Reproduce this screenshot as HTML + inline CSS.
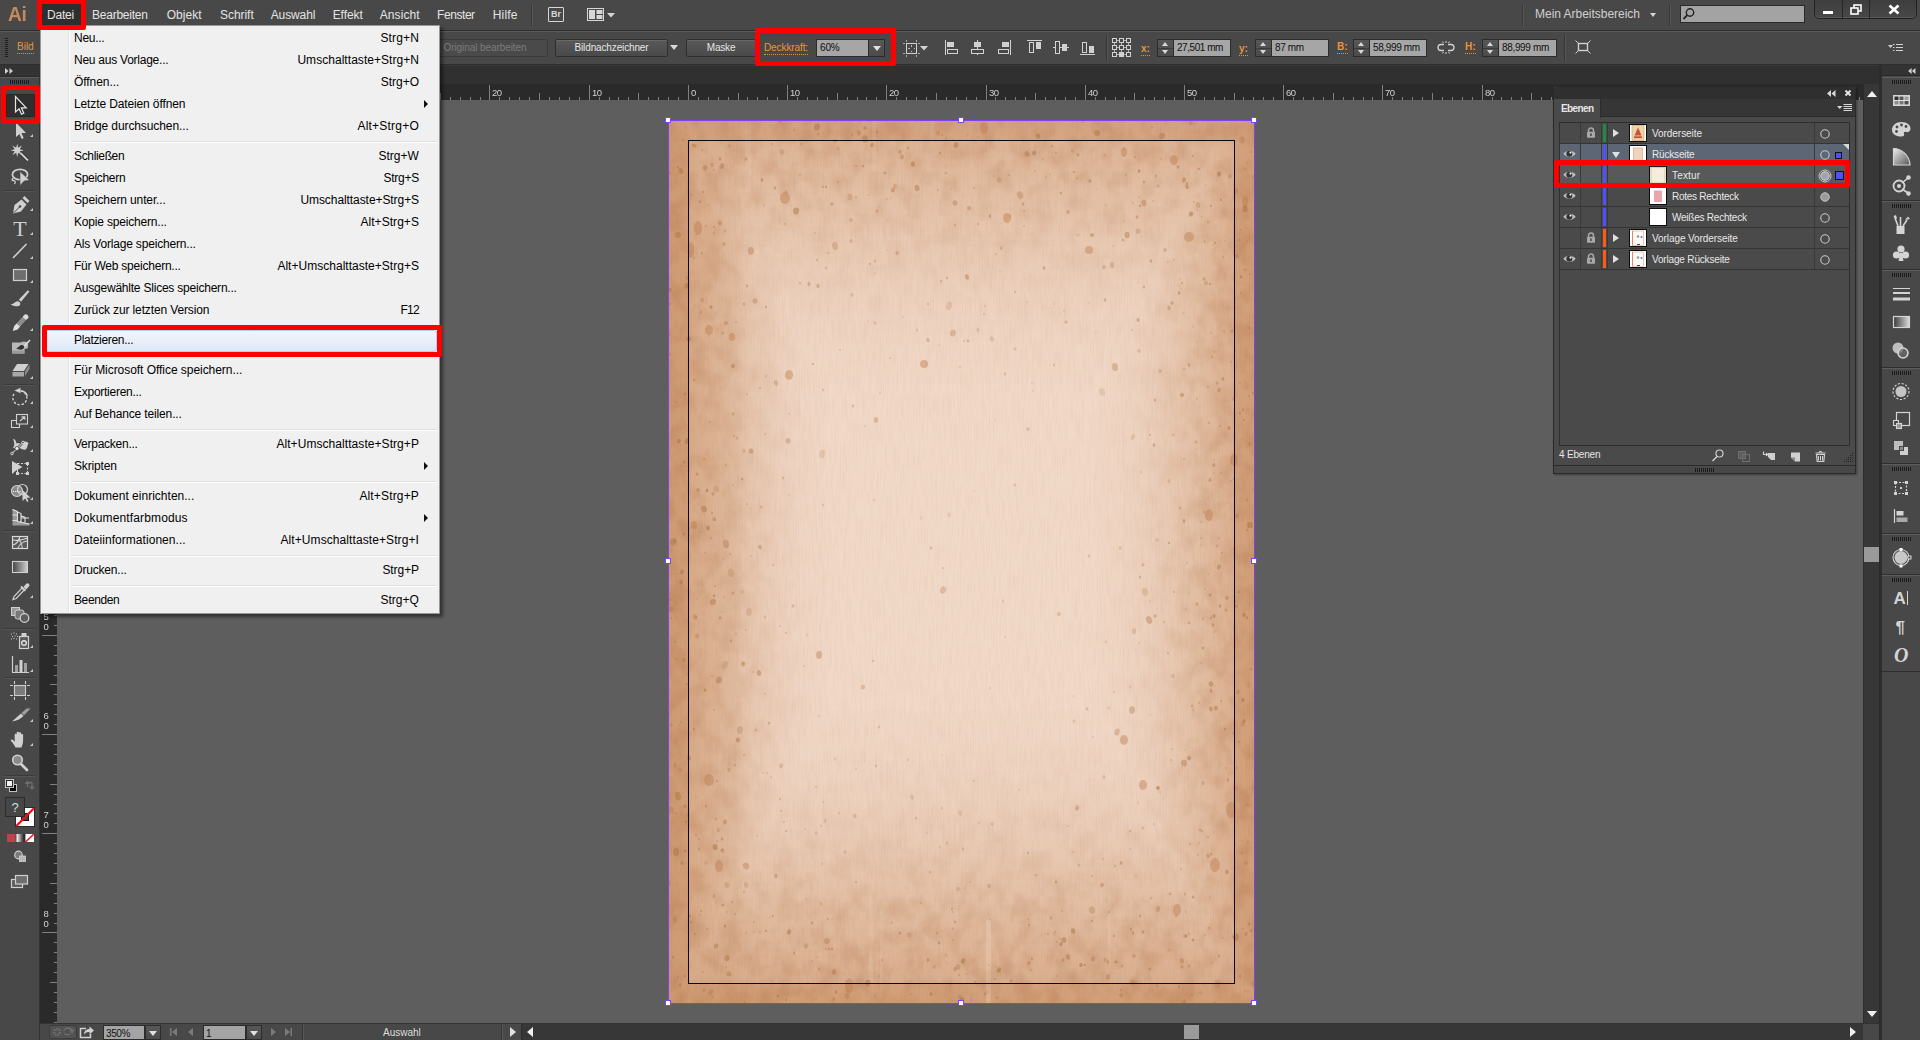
<!DOCTYPE html><html lang="de"><head><meta charset="utf-8"><title>Adobe Illustrator</title><style>
*{box-sizing:border-box;margin:0;padding:0}
html,body{width:1920px;height:1040px;overflow:hidden}
body{background:#5e5e5e;font-family:"Liberation Sans",sans-serif;font-size:10px;color:#e6e6e6;position:relative}
.abs{position:absolute}
.t{position:absolute;white-space:pre;line-height:1}
#menubar{left:0;top:0;width:1920px;height:31px;background:#484848;border-bottom:1px solid #2c2c2c}
#menubar .t{font-size:12px;top:9px;color:#e4e4e4}
#ctrl{left:0;top:31px;width:1920px;height:34px;background:#484848;border-top:1px solid #5a5a5a;border-bottom:1px solid #2e2e2e}
#tabstrip{left:0;top:65px;width:1920px;height:19px;background:#303030;border-top:1px solid #3a3a3a}
#hruler{left:40px;top:84px;width:1823px;height:16px;background:#2a2a2a}
#vruler{left:40px;top:100px;width:17px;height:923px;background:#2a2a2a}
#tools{left:0;top:65px;width:40px;height:975px;background:#484848;border-right:1px solid #333}
#vscroll{left:1863px;top:84px;width:18px;height:939px;background:#373737;border-left:1px solid #2c2c2c}
#status{left:40px;top:1023px;width:1841px;height:17px;background:#484848;border-top:1px solid #333}
#dock{left:1881px;top:65px;width:39px;height:975px;background:#484848;border-left:1px solid #2e2e2e}
.btn{position:absolute;height:18px;top:7px;border:1px solid #2f2f2f;background:linear-gradient(#585858,#4a4a4a);border-radius:2px;color:#e6e6e6;font-size:10px;text-align:center;line-height:16px;box-shadow:inset 0 1px 0 #6a6a6a}
.fld{position:absolute;height:18px;top:7px;border:1px solid #2c2c2c;background:#a6a6a6;color:#111;font-size:10px;line-height:16px;padding-left:3px;white-space:pre}
.lbl{position:absolute;top:11px;font-size:10px;color:#e8943a;line-height:1;white-space:pre;border-bottom:1px dotted #e8943a;padding-bottom:1px}
.red{position:absolute;border:5px solid #f00;border-radius:2px}
#menu{left:40px;top:25px;width:400px;height:589px;background:#f0f0f0;border:1px solid #979797;box-shadow:3px 3px 3px rgba(0,0,0,.45)}
#menu .gut{position:absolute;left:27px;top:1px;width:2px;height:585px;border-left:1px solid #e2e3e3;border-right:1px solid #fff}
#menu .mi{position:absolute;left:33px;font-size:12px;color:#000;white-space:pre;line-height:14px}
#menu .sc{position:absolute;right:20px;font-size:12px;color:#000;white-space:pre;line-height:14px;text-align:right}
#menu .sep{position:absolute;left:30px;right:2px;height:2px;border-top:1px solid #e0e0e0;border-bottom:1px solid #fff}
#menu .arr{position:absolute;left:383px;width:0;height:0;border-left:4px solid #111;border-top:4px solid transparent;border-bottom:4px solid transparent}
</style></head><body>
<svg class="abs" style="left:669px;top:120px" width="585" height="883" viewBox="0 0 585 883"><defs>
<filter id="fbx" filterUnits="userSpaceOnUse" x="-200" y="-400" width="985" height="1683"><feGaussianBlur stdDeviation="54 0"/></filter>
<filter id="fby" filterUnits="userSpaceOnUse" x="-400" y="-300" width="1385" height="1483"><feGaussianBlur stdDeviation="0 105"/></filter>
<mask id="mEdge" maskUnits="userSpaceOnUse" x="0" y="0" width="585" height="883"><g><rect width="585" height="883" fill="#9e9e9e"/><rect x="52" y="-300" width="481" height="1483" fill="#000" filter="url(#fbx)"/></g><g style="mix-blend-mode:lighten"><rect width="585" height="883" fill="#9e9e9e"/><rect x="-300" y="62" width="1185" height="730" fill="#000" filter="url(#fby)"/></g></mask>
<filter id="fb2" x="-30%" y="-30%" width="160%" height="160%"><feGaussianBlur stdDeviation="45 55"/></filter>
<mask id="mSpot" maskUnits="userSpaceOnUse" x="0" y="0" width="585" height="883"><rect width="585" height="883" fill="#fff"/><rect x="120" y="130" width="350" height="600" fill="#000" fill-opacity=".92" filter="url(#fb2)"/></mask>
<filter id="fSpots" x="0" y="0" width="100%" height="100%" color-interpolation-filters="sRGB">
<feTurbulence type="fractalNoise" baseFrequency="0.13" numOctaves="1" seed="5"/>
<feColorMatrix type="matrix" values="0 0 0 0 .66  0 0 0 0 .42  0 0 0 0 .26  12 0 0 0 -8.0"/>
<feGaussianBlur stdDeviation=".7"/>
</filter>
<filter id="fSpots2" x="0" y="0" width="100%" height="100%" color-interpolation-filters="sRGB">
<feTurbulence type="fractalNoise" baseFrequency="0.32" numOctaves="1" seed="9"/>
<feColorMatrix type="matrix" values="0 0 0 0 .68  0 0 0 0 .44  0 0 0 0 .28  0 13 0 0 -8.7"/>
<feGaussianBlur stdDeviation=".5"/>
</filter>
<filter id="fGrain" x="0" y="0" width="100%" height="100%" color-interpolation-filters="sRGB">
<feTurbulence type="fractalNoise" baseFrequency="0.7 0.04" numOctaves="2" seed="3"/>
<feColorMatrix type="matrix" values="0 0 0 0 .62  0 0 0 0 .40  0 0 0 0 .24  1.0 0 0 0 -.40"/>
</filter>
<filter id="fCloud" x="0" y="0" width="100%" height="100%" color-interpolation-filters="sRGB">
<feTurbulence type="fractalNoise" baseFrequency="0.055 0.045" numOctaves="3" seed="21"/>
<feColorMatrix type="matrix" values="0 0 0 0 .68  0 0 0 0 .44  0 0 0 0 .27  2.4 0 0 0 -.95"/>
</filter>
<filter id="fSoft" x="0" y="0" width="100%" height="100%"><feGaussianBlur stdDeviation=".55"/></filter>
<linearGradient id="gLeft" x1="0" x2="1"><stop offset="0" stop-color="#b97a48" stop-opacity=".11"/><stop offset=".56" stop-color="#b97a48" stop-opacity=".11"/><stop offset=".63" stop-color="#b97a48" stop-opacity=".03"/><stop offset="1" stop-color="#b97a48" stop-opacity="0"/></linearGradient>
<linearGradient id="gv" x1="0" y1="0" x2="0" y2="1"><stop offset="0" stop-color="#fff" stop-opacity=".0"/><stop offset=".5" stop-color="#fff" stop-opacity=".35"/><stop offset="1" stop-color="#fff" stop-opacity="0"/></linearGradient>
</defs><rect width="585" height="883" fill="#f1d9c8"/><rect width="585" height="883" fill="#c07e4c" mask="url(#mEdge)"/><path d="M0 0H585V883H0Z M19 20V863H566V20Z" fill="#bd7a48" fill-opacity=".23" fill-rule="evenodd"/><rect x="0" y="0" width="120" height="883" fill="url(#gLeft)"/><g mask="url(#mEdge)"><rect width="585" height="883" filter="url(#fCloud)" opacity=".6"/></g><rect width="585" height="883" filter="url(#fGrain)" opacity=".14"/><g filter="url(#fSoft)" fill="#a8703f"><ellipse cx="464" cy="83" rx="0.7" ry="1.0" fill-opacity="0.36"/><ellipse cx="487" cy="56" rx="1.0" ry="1.4" fill-opacity="0.40"/><ellipse cx="346" cy="172" rx="1.0" ry="1.3" fill-opacity="0.28"/><ellipse cx="163" cy="881" rx="0.7" ry="0.8" fill-opacity="0.44"/><ellipse cx="169" cy="62" rx="1.2" ry="1.4" fill-opacity="0.26"/><ellipse cx="10" cy="605" rx="0.7" ry="1.0" fill-opacity="0.37"/><ellipse cx="43" cy="556" rx="1.0" ry="1.1" fill-opacity="0.31"/><ellipse cx="240" cy="815" rx="2.5" ry="2.6" fill-opacity="0.25" transform="rotate(15 240 815)"/><ellipse cx="112" cy="646" rx="2.0" ry="2.4" fill-opacity="0.26" transform="rotate(25 112 646)"/><ellipse cx="0" cy="763" rx="1.6" ry="2.2" fill-opacity="0.33" transform="rotate(-14 0 763)"/><ellipse cx="59" cy="874" rx="1.0" ry="1.3" fill-opacity="0.24"/><ellipse cx="226" cy="66" rx="2.0" ry="2.5" fill-opacity="0.29" transform="rotate(-6 226 66)"/><ellipse cx="265" cy="847" rx="1.6" ry="1.9" fill-opacity="0.27" transform="rotate(6 265 847)"/><ellipse cx="282" cy="69" rx="0.8" ry="1.1" fill-opacity="0.23"/><ellipse cx="421" cy="61" rx="1.5" ry="1.9" fill-opacity="0.40" transform="rotate(-21 421 61)"/><ellipse cx="124" cy="808" rx="0.7" ry="0.8" fill-opacity="0.30"/><ellipse cx="574" cy="580" rx="1.6" ry="2.0" fill-opacity="0.50" transform="rotate(21 574 580)"/><ellipse cx="20" cy="528" rx="0.7" ry="0.8" fill-opacity="0.44"/><ellipse cx="44" cy="482" rx="3.0" ry="3.2" fill-opacity="0.42" transform="rotate(23 44 482)"/><ellipse cx="200" cy="75" rx="0.7" ry="0.8" fill-opacity="0.45"/><ellipse cx="515" cy="643" rx="3.0" ry="3.6" fill-opacity="0.38" transform="rotate(-2 515 643)"/><ellipse cx="181" cy="77" rx="2.5" ry="3.4" fill-opacity="0.25" transform="rotate(8 181 77)"/><ellipse cx="284" cy="792" rx="0.8" ry="0.9" fill-opacity="0.38"/><ellipse cx="530" cy="583" rx="1.0" ry="1.3" fill-opacity="0.30"/><ellipse cx="515" cy="339" rx="1.1" ry="1.2" fill-opacity="0.25"/><ellipse cx="524" cy="36" rx="1.0" ry="1.1" fill-opacity="0.47"/><ellipse cx="542" cy="734" rx="1.4" ry="1.6" fill-opacity="0.36"/><ellipse cx="574" cy="400" rx="0.7" ry="0.9" fill-opacity="0.32"/><ellipse cx="111" cy="679" rx="0.8" ry="1.2" fill-opacity="0.36"/><ellipse cx="64" cy="473" rx="1.1" ry="1.4" fill-opacity="0.44"/><ellipse cx="278" cy="158" rx="1.3" ry="1.3" fill-opacity="0.29"/><ellipse cx="293" cy="880" rx="2.5" ry="2.6" fill-opacity="0.49" transform="rotate(22 293 880)"/><ellipse cx="423" cy="115" rx="2.0" ry="2.0" fill-opacity="0.42" transform="rotate(3 423 115)"/><ellipse cx="58" cy="765" rx="2.5" ry="2.8" fill-opacity="0.26" transform="rotate(-5 58 765)"/><ellipse cx="545" cy="231" rx="0.6" ry="0.6" fill-opacity="0.32"/><ellipse cx="17" cy="714" rx="0.7" ry="0.8" fill-opacity="0.29"/><ellipse cx="82" cy="131" rx="3.0" ry="3.9" fill-opacity="0.35" transform="rotate(-3 82 131)"/><ellipse cx="486" cy="496" rx="1.4" ry="1.8" fill-opacity="0.36"/><ellipse cx="16" cy="856" rx="1.2" ry="1.7" fill-opacity="0.39"/><ellipse cx="268" cy="813" rx="1.2" ry="1.5" fill-opacity="0.29"/><ellipse cx="361" cy="817" rx="0.6" ry="0.6" fill-opacity="0.24"/><ellipse cx="166" cy="639" rx="1.3" ry="1.7" fill-opacity="0.18"/><ellipse cx="299" cy="221" rx="1.4" ry="1.4" fill-opacity="0.32"/><ellipse cx="505" cy="472" rx="0.9" ry="1.1" fill-opacity="0.39"/><ellipse cx="528" cy="279" rx="0.9" ry="1.3" fill-opacity="0.27"/><ellipse cx="247" cy="698" rx="1.2" ry="1.6" fill-opacity="0.29"/><ellipse cx="201" cy="882" rx="0.7" ry="0.7" fill-opacity="0.37"/><ellipse cx="359" cy="799" rx="0.9" ry="1.0" fill-opacity="0.27"/><ellipse cx="579" cy="818" rx="0.7" ry="0.9" fill-opacity="0.28"/><ellipse cx="57" cy="345" rx="1.1" ry="1.4" fill-opacity="0.32"/><ellipse cx="410" cy="745" rx="1.3" ry="1.5" fill-opacity="0.28"/><ellipse cx="354" cy="84" rx="1.1" ry="1.5" fill-opacity="0.45"/><ellipse cx="504" cy="556" rx="1.8" ry="2.3" fill-opacity="0.24" transform="rotate(-8 504 556)"/><ellipse cx="446" cy="247" rx="3.0" ry="4.1" fill-opacity="0.32" transform="rotate(-5 446 247)"/><ellipse cx="524" cy="777" rx="1.2" ry="1.4" fill-opacity="0.44"/><ellipse cx="41" cy="302" rx="0.6" ry="0.9" fill-opacity="0.46"/><ellipse cx="106" cy="68" rx="1.3" ry="1.7" fill-opacity="0.40"/><ellipse cx="573" cy="20" rx="3.0" ry="3.6" fill-opacity="0.31" transform="rotate(0 573 20)"/><ellipse cx="445" cy="572" rx="1.0" ry="1.4" fill-opacity="0.21"/><ellipse cx="297" cy="854" rx="0.8" ry="1.1" fill-opacity="0.41"/><ellipse cx="350" cy="670" rx="0.9" ry="1.3" fill-opacity="0.23"/><ellipse cx="158" cy="821" rx="3.0" ry="3.0" fill-opacity="0.31" transform="rotate(-13 158 821)"/><ellipse cx="25" cy="138" rx="1.2" ry="1.4" fill-opacity="0.25"/><ellipse cx="147" cy="667" rx="0.8" ry="1.1" fill-opacity="0.36"/><ellipse cx="573" cy="721" rx="0.8" ry="1.0" fill-opacity="0.25"/><ellipse cx="504" cy="315" rx="1.1" ry="1.4" fill-opacity="0.30"/><ellipse cx="557" cy="648" rx="0.8" ry="0.9" fill-opacity="0.37"/><ellipse cx="424" cy="617" rx="1.0" ry="1.1" fill-opacity="0.29"/><ellipse cx="573" cy="809" rx="0.7" ry="0.7" fill-opacity="0.42"/><ellipse cx="16" cy="34" rx="1.0" ry="1.0" fill-opacity="0.26"/><ellipse cx="280" cy="186" rx="3.0" ry="4.2" fill-opacity="0.20" transform="rotate(15 280 186)"/><ellipse cx="228" cy="133" rx="1.8" ry="2.2" fill-opacity="0.27" transform="rotate(12 228 133)"/><ellipse cx="539" cy="378" rx="0.8" ry="0.9" fill-opacity="0.34"/><ellipse cx="271" cy="727" rx="1.0" ry="1.3" fill-opacity="0.23"/><ellipse cx="166" cy="126" rx="3.0" ry="4.2" fill-opacity="0.28" transform="rotate(-9 166 126)"/><ellipse cx="581" cy="405" rx="3.0" ry="3.3" fill-opacity="0.49" transform="rotate(-7 581 405)"/><ellipse cx="515" cy="249" rx="1.4" ry="1.5" fill-opacity="0.22"/><ellipse cx="13" cy="743" rx="1.6" ry="2.2" fill-opacity="0.39" transform="rotate(-21 13 743)"/><ellipse cx="50" cy="560" rx="3.0" ry="3.6" fill-opacity="0.43" transform="rotate(11 50 560)"/><ellipse cx="286" cy="802" rx="1.3" ry="1.5" fill-opacity="0.32"/><ellipse cx="520" cy="846" rx="1.4" ry="1.4" fill-opacity="0.34"/><ellipse cx="540" cy="808" rx="0.9" ry="1.1" fill-opacity="0.51"/><ellipse cx="120" cy="375" rx="0.7" ry="0.9" fill-opacity="0.26"/><ellipse cx="91" cy="812" rx="1.3" ry="1.6" fill-opacity="0.24"/><ellipse cx="183" cy="175" rx="1.6" ry="2.1" fill-opacity="0.23" transform="rotate(5 183 175)"/><ellipse cx="131" cy="163" rx="0.9" ry="1.3" fill-opacity="0.40"/><ellipse cx="551" cy="486" rx="1.3" ry="1.8" fill-opacity="0.47"/><ellipse cx="320" cy="845" rx="1.0" ry="1.1" fill-opacity="0.34"/><ellipse cx="467" cy="862" rx="1.0" ry="1.0" fill-opacity="0.46"/><ellipse cx="85" cy="802" rx="0.8" ry="1.2" fill-opacity="0.40"/><ellipse cx="1" cy="725" rx="0.8" ry="0.9" fill-opacity="0.26"/><ellipse cx="57" cy="424" rx="3.0" ry="4.2" fill-opacity="0.36" transform="rotate(-10 57 424)"/><ellipse cx="53" cy="730" rx="1.5" ry="1.8" fill-opacity="0.34" transform="rotate(22 53 730)"/><ellipse cx="564" cy="279" rx="1.5" ry="1.8" fill-opacity="0.32" transform="rotate(11 564 279)"/><ellipse cx="210" cy="607" rx="1.2" ry="1.6" fill-opacity="0.26"/><ellipse cx="439" cy="842" rx="1.5" ry="1.7" fill-opacity="0.42" transform="rotate(-15 439 842)"/><ellipse cx="484" cy="81" rx="0.8" ry="1.0" fill-opacity="0.26"/><ellipse cx="113" cy="32" rx="2.5" ry="2.8" fill-opacity="0.26" transform="rotate(-17 113 32)"/><ellipse cx="73" cy="359" rx="1.2" ry="1.3" fill-opacity="0.42"/><ellipse cx="87" cy="610" rx="1.2" ry="1.6" fill-opacity="0.33"/><ellipse cx="186" cy="696" rx="1.8" ry="2.0" fill-opacity="0.28" transform="rotate(-16 186 696)"/><ellipse cx="120" cy="294" rx="0.8" ry="0.9" fill-opacity="0.29"/><ellipse cx="528" cy="484" rx="1.4" ry="1.8" fill-opacity="0.34"/><ellipse cx="546" cy="882" rx="0.9" ry="0.9" fill-opacity="0.40"/><ellipse cx="454" cy="120" rx="1.2" ry="1.4" fill-opacity="0.38"/><ellipse cx="570" cy="120" rx="1.5" ry="1.5" fill-opacity="0.39" transform="rotate(21 570 120)"/><ellipse cx="2" cy="605" rx="1.6" ry="1.7" fill-opacity="0.34" transform="rotate(5 2 605)"/><ellipse cx="530" cy="543" rx="0.6" ry="0.7" fill-opacity="0.26"/><ellipse cx="309" cy="104" rx="1.1" ry="1.2" fill-opacity="0.33"/><ellipse cx="194" cy="567" rx="2.2" ry="2.6" fill-opacity="0.28" transform="rotate(-0 194 567)"/><ellipse cx="534" cy="499" rx="1.0" ry="1.4" fill-opacity="0.34"/><ellipse cx="500" cy="361" rx="1.6" ry="2.3" fill-opacity="0.22" transform="rotate(-8 500 361)"/><ellipse cx="305" cy="371" rx="0.7" ry="0.9" fill-opacity="0.19"/><ellipse cx="516" cy="774" rx="1.3" ry="1.8" fill-opacity="0.29"/><ellipse cx="515" cy="882" rx="2.2" ry="2.7" fill-opacity="0.34" transform="rotate(3 515 882)"/><ellipse cx="96" cy="574" rx="0.8" ry="0.8" fill-opacity="0.38"/><ellipse cx="0" cy="215" rx="1.1" ry="1.3" fill-opacity="0.29"/><ellipse cx="184" cy="286" rx="1.3" ry="1.4" fill-opacity="0.30"/><ellipse cx="405" cy="52" rx="1.1" ry="1.1" fill-opacity="0.47"/><ellipse cx="562" cy="242" rx="0.8" ry="1.1" fill-opacity="0.33"/><ellipse cx="71" cy="610" rx="3.0" ry="3.9" fill-opacity="0.26" transform="rotate(15 71 610)"/><ellipse cx="542" cy="589" rx="2.0" ry="2.4" fill-opacity="0.40" transform="rotate(-21 542 589)"/><ellipse cx="537" cy="65" rx="0.6" ry="0.7" fill-opacity="0.40"/><ellipse cx="470" cy="77" rx="0.9" ry="1.0" fill-opacity="0.29"/><ellipse cx="20" cy="408" rx="1.2" ry="1.7" fill-opacity="0.24"/><ellipse cx="37" cy="686" rx="1.1" ry="1.5" fill-opacity="0.41"/><ellipse cx="305" cy="840" rx="0.9" ry="1.1" fill-opacity="0.26"/><ellipse cx="499" cy="533" rx="0.9" ry="1.2" fill-opacity="0.32"/><ellipse cx="511" cy="159" rx="0.6" ry="0.8" fill-opacity="0.37"/><ellipse cx="423" cy="756" rx="0.8" ry="1.0" fill-opacity="0.41"/><ellipse cx="463" cy="210" rx="1.0" ry="1.3" fill-opacity="0.27"/><ellipse cx="412" cy="845" rx="1.8" ry="1.9" fill-opacity="0.51" transform="rotate(-2 412 845)"/><ellipse cx="436" cy="35" rx="1.4" ry="1.6" fill-opacity="0.28"/><ellipse cx="248" cy="68" rx="2.5" ry="3.3" fill-opacity="0.43" transform="rotate(-14 248 68)"/><ellipse cx="270" cy="823" rx="1.1" ry="1.6" fill-opacity="0.48"/><ellipse cx="517" cy="816" rx="1.2" ry="1.3" fill-opacity="0.49"/><ellipse cx="29" cy="370" rx="1.5" ry="1.8" fill-opacity="0.45" transform="rotate(-5 29 370)"/><ellipse cx="127" cy="91" rx="3.0" ry="3.5" fill-opacity="0.46" transform="rotate(13 127 91)"/><ellipse cx="423" cy="801" rx="1.1" ry="1.3" fill-opacity="0.44"/><ellipse cx="75" cy="184" rx="1.3" ry="1.4" fill-opacity="0.35"/><ellipse cx="86" cy="181" rx="2.5" ry="2.7" fill-opacity="0.31" transform="rotate(1 86 181)"/><ellipse cx="208" cy="91" rx="1.8" ry="1.8" fill-opacity="0.27" transform="rotate(-24 208 91)"/><ellipse cx="571" cy="263" rx="0.9" ry="1.0" fill-opacity="0.39"/><ellipse cx="152" cy="706" rx="1.3" ry="1.5" fill-opacity="0.19"/><ellipse cx="291" cy="247" rx="1.2" ry="1.6" fill-opacity="0.19"/><ellipse cx="531" cy="710" rx="1.0" ry="1.2" fill-opacity="0.41"/><ellipse cx="13" cy="346" rx="0.7" ry="0.8" fill-opacity="0.49"/><ellipse cx="518" cy="64" rx="1.1" ry="1.4" fill-opacity="0.48"/><ellipse cx="360" cy="843" rx="1.6" ry="1.8" fill-opacity="0.43" transform="rotate(-21 360 843)"/><ellipse cx="28" cy="479" rx="0.7" ry="1.0" fill-opacity="0.31"/><ellipse cx="223" cy="803" rx="0.8" ry="0.9" fill-opacity="0.40"/><ellipse cx="277" cy="19" rx="1.0" ry="1.3" fill-opacity="0.30"/><ellipse cx="1" cy="480" rx="1.0" ry="1.4" fill-opacity="0.39"/><ellipse cx="46" cy="727" rx="2.5" ry="2.9" fill-opacity="0.49" transform="rotate(-8 46 727)"/><ellipse cx="482" cy="141" rx="1.3" ry="1.5" fill-opacity="0.41"/><ellipse cx="579" cy="722" rx="1.0" ry="1.2" fill-opacity="0.27"/><ellipse cx="509" cy="47" rx="1.4" ry="1.8" fill-opacity="0.44"/><ellipse cx="107" cy="756" rx="1.6" ry="2.0" fill-opacity="0.42" transform="rotate(-4 107 756)"/><ellipse cx="469" cy="111" rx="2.2" ry="2.8" fill-opacity="0.29" transform="rotate(24 469 111)"/><ellipse cx="543" cy="237" rx="1.0" ry="1.2" fill-opacity="0.39"/><ellipse cx="578" cy="43" rx="0.8" ry="0.9" fill-opacity="0.48"/><ellipse cx="529" cy="735" rx="0.9" ry="1.0" fill-opacity="0.33"/><ellipse cx="491" cy="251" rx="1.8" ry="1.9" fill-opacity="0.28" transform="rotate(4 491 251)"/><ellipse cx="395" cy="191" rx="0.8" ry="1.1" fill-opacity="0.26"/><ellipse cx="525" cy="778" rx="0.8" ry="0.8" fill-opacity="0.32"/><ellipse cx="84" cy="552" rx="1.0" ry="1.1" fill-opacity="0.21"/><ellipse cx="327" cy="134" rx="1.0" ry="1.0" fill-opacity="0.34"/><ellipse cx="239" cy="28" rx="1.5" ry="1.5" fill-opacity="0.35" transform="rotate(3 239 28)"/><ellipse cx="103" cy="24" rx="0.8" ry="0.9" fill-opacity="0.43"/><ellipse cx="325" cy="56" rx="0.9" ry="1.0" fill-opacity="0.25"/><ellipse cx="548" cy="426" rx="1.2" ry="1.7" fill-opacity="0.29"/><ellipse cx="163" cy="799" rx="0.8" ry="0.9" fill-opacity="0.29"/><ellipse cx="27" cy="115" rx="0.9" ry="0.9" fill-opacity="0.29"/><ellipse cx="205" cy="380" rx="1.4" ry="1.5" fill-opacity="0.15"/><ellipse cx="491" cy="672" rx="0.9" ry="1.2" fill-opacity="0.27"/><ellipse cx="578" cy="380" rx="1.0" ry="1.4" fill-opacity="0.38"/><ellipse cx="475" cy="62" rx="1.1" ry="1.5" fill-opacity="0.47"/><ellipse cx="6" cy="645" rx="2.0" ry="2.6" fill-opacity="0.26" transform="rotate(-8 6 645)"/><ellipse cx="567" cy="817" rx="3.0" ry="3.6" fill-opacity="0.43" transform="rotate(8 567 817)"/><ellipse cx="19" cy="554" rx="1.6" ry="1.6" fill-opacity="0.25" transform="rotate(-9 19 554)"/><ellipse cx="440" cy="792" rx="0.9" ry="1.2" fill-opacity="0.43"/><ellipse cx="485" cy="704" rx="1.0" ry="1.4" fill-opacity="0.21"/><ellipse cx="147" cy="713" rx="1.5" ry="1.8" fill-opacity="0.19" transform="rotate(-1 147 713)"/><ellipse cx="563" cy="211" rx="1.3" ry="1.6" fill-opacity="0.45"/><ellipse cx="321" cy="800" rx="0.8" ry="0.9" fill-opacity="0.43"/><ellipse cx="543" cy="843" rx="1.0" ry="1.1" fill-opacity="0.27"/><ellipse cx="42" cy="872" rx="2.0" ry="2.9" fill-opacity="0.33" transform="rotate(24 42 872)"/><ellipse cx="328" cy="878" rx="1.1" ry="1.5" fill-opacity="0.44"/><ellipse cx="385" cy="184" rx="0.8" ry="1.0" fill-opacity="0.21"/><ellipse cx="364" cy="271" rx="0.7" ry="0.9" fill-opacity="0.27"/><ellipse cx="551" cy="306" rx="1.0" ry="1.1" fill-opacity="0.36"/><ellipse cx="513" cy="841" rx="2.0" ry="2.8" fill-opacity="0.36" transform="rotate(-6 513 841)"/><ellipse cx="38" cy="370" rx="1.3" ry="1.5" fill-opacity="0.40"/><ellipse cx="7" cy="539" rx="1.1" ry="1.5" fill-opacity="0.28"/><ellipse cx="58" cy="792" rx="1.1" ry="1.1" fill-opacity="0.24"/><ellipse cx="408" cy="874" rx="0.6" ry="0.6" fill-opacity="0.43"/><ellipse cx="381" cy="54" rx="0.6" ry="0.7" fill-opacity="0.50"/><ellipse cx="39" cy="408" rx="2.0" ry="2.5" fill-opacity="0.47" transform="rotate(4 39 408)"/><ellipse cx="56" cy="702" rx="2.0" ry="2.7" fill-opacity="0.40" transform="rotate(20 56 702)"/><ellipse cx="388" cy="856" rx="0.8" ry="0.9" fill-opacity="0.36"/><ellipse cx="64" cy="365" rx="0.8" ry="0.8" fill-opacity="0.40"/><ellipse cx="330" cy="60" rx="2.2" ry="2.7" fill-opacity="0.25" transform="rotate(-10 330 60)"/><ellipse cx="32" cy="192" rx="1.5" ry="1.6" fill-opacity="0.26" transform="rotate(20 32 192)"/><ellipse cx="474" cy="445" rx="1.6" ry="1.9" fill-opacity="0.28" transform="rotate(6 474 445)"/><ellipse cx="505" cy="851" rx="0.6" ry="0.8" fill-opacity="0.30"/><ellipse cx="534" cy="480" rx="0.7" ry="0.8" fill-opacity="0.32"/><ellipse cx="542" cy="86" rx="1.0" ry="1.1" fill-opacity="0.44"/><ellipse cx="252" cy="398" rx="1.4" ry="1.7" fill-opacity="0.15"/><ellipse cx="234" cy="197" rx="1.1" ry="1.3" fill-opacity="0.17"/><ellipse cx="564" cy="613" rx="0.9" ry="1.1" fill-opacity="0.40"/><ellipse cx="31" cy="82" rx="1.0" ry="1.4" fill-opacity="0.46"/><ellipse cx="218" cy="79" rx="0.8" ry="1.2" fill-opacity="0.24"/><ellipse cx="461" cy="567" rx="1.3" ry="1.7" fill-opacity="0.18"/><ellipse cx="542" cy="564" rx="2.2" ry="2.8" fill-opacity="0.42" transform="rotate(-25 542 564)"/><ellipse cx="575" cy="809" rx="0.7" ry="0.9" fill-opacity="0.36"/><ellipse cx="187" cy="649" rx="0.8" ry="0.9" fill-opacity="0.33"/><ellipse cx="404" cy="576" rx="0.9" ry="1.0" fill-opacity="0.16"/><ellipse cx="554" cy="137" rx="1.2" ry="1.4" fill-opacity="0.24"/><ellipse cx="395" cy="820" rx="2.5" ry="3.1" fill-opacity="0.44" transform="rotate(-1 395 820)"/><ellipse cx="190" cy="13" rx="2.0" ry="2.5" fill-opacity="0.34" transform="rotate(1 190 13)"/><ellipse cx="574" cy="290" rx="1.0" ry="1.2" fill-opacity="0.42"/><ellipse cx="26" cy="814" rx="1.0" ry="1.3" fill-opacity="0.34"/><ellipse cx="532" cy="402" rx="1.0" ry="1.3" fill-opacity="0.26"/><ellipse cx="206" cy="141" rx="1.3" ry="1.9" fill-opacity="0.22"/><ellipse cx="471" cy="86" rx="0.9" ry="1.2" fill-opacity="0.48"/><ellipse cx="201" cy="144" rx="0.9" ry="1.3" fill-opacity="0.39"/><ellipse cx="213" cy="840" rx="1.0" ry="1.4" fill-opacity="0.40"/><ellipse cx="65" cy="316" rx="1.0" ry="1.1" fill-opacity="0.37"/><ellipse cx="154" cy="67" rx="1.0" ry="1.1" fill-opacity="0.48"/><ellipse cx="481" cy="481" rx="0.7" ry="0.9" fill-opacity="0.29"/><ellipse cx="386" cy="812" rx="1.0" ry="1.2" fill-opacity="0.30"/><ellipse cx="518" cy="67" rx="1.6" ry="2.1" fill-opacity="0.49" transform="rotate(-21 518 67)"/><ellipse cx="528" cy="90" rx="0.8" ry="0.9" fill-opacity="0.29"/><ellipse cx="82" cy="838" rx="0.8" ry="1.0" fill-opacity="0.25"/><ellipse cx="305" cy="68" rx="0.9" ry="1.2" fill-opacity="0.25"/><ellipse cx="541" cy="777" rx="0.8" ry="0.8" fill-opacity="0.37"/><ellipse cx="326" cy="859" rx="0.8" ry="0.9" fill-opacity="0.49"/><ellipse cx="159" cy="133" rx="0.8" ry="1.1" fill-opacity="0.40"/><ellipse cx="19" cy="99" rx="0.6" ry="0.6" fill-opacity="0.35"/><ellipse cx="392" cy="73" rx="0.9" ry="1.2" fill-opacity="0.48"/><ellipse cx="196" cy="306" rx="1.0" ry="1.3" fill-opacity="0.19"/><ellipse cx="137" cy="779" rx="0.8" ry="1.0" fill-opacity="0.27"/><ellipse cx="537" cy="163" rx="1.8" ry="2.2" fill-opacity="0.30" transform="rotate(-12 537 163)"/><ellipse cx="513" cy="163" rx="1.0" ry="1.3" fill-opacity="0.35"/><ellipse cx="20" cy="219" rx="2.2" ry="2.4" fill-opacity="0.45" transform="rotate(-14 20 219)"/><ellipse cx="242" cy="874" rx="1.1" ry="1.1" fill-opacity="0.26"/><ellipse cx="585" cy="370" rx="1.0" ry="1.4" fill-opacity="0.33"/><ellipse cx="278" cy="723" rx="1.3" ry="1.9" fill-opacity="0.19"/><ellipse cx="93" cy="60" rx="1.3" ry="1.8" fill-opacity="0.50"/><ellipse cx="544" cy="125" rx="0.7" ry="0.7" fill-opacity="0.29"/><ellipse cx="160" cy="829" rx="0.9" ry="1.2" fill-opacity="0.43"/><ellipse cx="470" cy="231" rx="2.0" ry="2.1" fill-opacity="0.23" transform="rotate(-10 470 231)"/><ellipse cx="445" cy="816" rx="0.9" ry="1.2" fill-opacity="0.48"/><ellipse cx="283" cy="789" rx="1.1" ry="1.5" fill-opacity="0.36"/><ellipse cx="14" cy="673" rx="0.7" ry="0.7" fill-opacity="0.32"/><ellipse cx="481" cy="849" rx="1.2" ry="1.5" fill-opacity="0.46"/><ellipse cx="272" cy="161" rx="1.0" ry="1.2" fill-opacity="0.38"/><ellipse cx="435" cy="147" rx="1.6" ry="1.9" fill-opacity="0.32" transform="rotate(2 435 147)"/><ellipse cx="137" cy="826" rx="2.2" ry="2.7" fill-opacity="0.28" transform="rotate(24 137 826)"/><ellipse cx="138" cy="515" rx="1.1" ry="1.1" fill-opacity="0.21"/><ellipse cx="540" cy="454" rx="0.6" ry="0.7" fill-opacity="0.40"/><ellipse cx="495" cy="502" rx="1.1" ry="1.3" fill-opacity="0.30"/><ellipse cx="568" cy="247" rx="0.7" ry="0.7" fill-opacity="0.32"/><ellipse cx="233" cy="37" rx="2.0" ry="2.4" fill-opacity="0.37" transform="rotate(3 233 37)"/><ellipse cx="553" cy="433" rx="1.0" ry="1.3" fill-opacity="0.32"/><ellipse cx="542" cy="571" rx="1.3" ry="1.9" fill-opacity="0.44"/><ellipse cx="474" cy="708" rx="1.3" ry="1.4" fill-opacity="0.26"/><ellipse cx="13" cy="452" rx="2.0" ry="2.8" fill-opacity="0.41" transform="rotate(22 13 452)"/><ellipse cx="377" cy="57" rx="0.8" ry="0.9" fill-opacity="0.30"/><ellipse cx="1" cy="234" rx="1.3" ry="1.7" fill-opacity="0.30"/><ellipse cx="135" cy="546" rx="0.8" ry="0.9" fill-opacity="0.26"/><ellipse cx="362" cy="850" rx="1.1" ry="1.2" fill-opacity="0.27"/><ellipse cx="39" cy="85" rx="0.7" ry="0.9" fill-opacity="0.37"/><ellipse cx="117" cy="513" rx="1.1" ry="1.3" fill-opacity="0.25"/><ellipse cx="462" cy="809" rx="1.2" ry="1.6" fill-opacity="0.34"/><ellipse cx="528" cy="222" rx="0.6" ry="0.7" fill-opacity="0.35"/><ellipse cx="33" cy="133" rx="1.0" ry="1.3" fill-opacity="0.45"/><ellipse cx="157" cy="704" rx="0.7" ry="0.8" fill-opacity="0.27"/><ellipse cx="278" cy="843" rx="0.7" ry="0.7" fill-opacity="0.39"/><ellipse cx="291" cy="693" rx="2.0" ry="2.8" fill-opacity="0.21" transform="rotate(-5 291 693)"/><ellipse cx="51" cy="498" rx="1.6" ry="1.6" fill-opacity="0.34" transform="rotate(-21 51 498)"/><ellipse cx="558" cy="752" rx="1.6" ry="2.3" fill-opacity="0.48" transform="rotate(7 558 752)"/><ellipse cx="196" cy="19" rx="3.0" ry="3.6" fill-opacity="0.38" transform="rotate(-5 196 19)"/><ellipse cx="515" cy="401" rx="1.4" ry="1.9" fill-opacity="0.43"/><ellipse cx="424" cy="839" rx="2.2" ry="2.4" fill-opacity="0.36" transform="rotate(-10 424 839)"/><ellipse cx="351" cy="75" rx="3.0" ry="4.0" fill-opacity="0.31" transform="rotate(-24 351 75)"/><ellipse cx="243" cy="677" rx="1.8" ry="2.5" fill-opacity="0.23" transform="rotate(-10 243 677)"/><ellipse cx="559" cy="660" rx="1.3" ry="1.8" fill-opacity="0.39"/><ellipse cx="318" cy="872" rx="1.6" ry="2.1" fill-opacity="0.33" transform="rotate(23 318 872)"/><ellipse cx="523" cy="586" rx="1.2" ry="1.3" fill-opacity="0.38"/><ellipse cx="13" cy="256" rx="0.7" ry="0.8" fill-opacity="0.26"/><ellipse cx="404" cy="732" rx="1.0" ry="1.3" fill-opacity="0.22"/><ellipse cx="358" cy="182" rx="0.7" ry="0.7" fill-opacity="0.30"/><ellipse cx="12" cy="51" rx="2.2" ry="3.1" fill-opacity="0.47" transform="rotate(-14 12 51)"/><ellipse cx="514" cy="193" rx="1.1" ry="1.6" fill-opacity="0.22"/><ellipse cx="379" cy="814" rx="1.2" ry="1.3" fill-opacity="0.27"/><ellipse cx="500" cy="423" rx="1.3" ry="1.3" fill-opacity="0.35"/><ellipse cx="37" cy="743" rx="1.6" ry="1.8" fill-opacity="0.24" transform="rotate(5 37 743)"/><ellipse cx="532" cy="543" rx="0.7" ry="0.9" fill-opacity="0.39"/><ellipse cx="171" cy="230" rx="1.0" ry="1.1" fill-opacity="0.24"/><ellipse cx="95" cy="85" rx="0.9" ry="1.3" fill-opacity="0.31"/><ellipse cx="131" cy="20" rx="0.7" ry="0.7" fill-opacity="0.42"/><ellipse cx="552" cy="80" rx="1.0" ry="1.4" fill-opacity="0.48"/><ellipse cx="489" cy="66" rx="1.1" ry="1.4" fill-opacity="0.38"/><ellipse cx="44" cy="877" rx="0.8" ry="1.1" fill-opacity="0.46"/><ellipse cx="262" cy="874" rx="1.6" ry="2.0" fill-opacity="0.45" transform="rotate(4 262 874)"/><ellipse cx="369" cy="16" rx="2.2" ry="2.8" fill-opacity="0.50" transform="rotate(-13 369 16)"/><ellipse cx="306" cy="862" rx="0.9" ry="1.2" fill-opacity="0.47"/><ellipse cx="33" cy="30" rx="0.8" ry="1.0" fill-opacity="0.46"/><ellipse cx="471" cy="796" rx="1.1" ry="1.4" fill-opacity="0.39"/><ellipse cx="26" cy="497" rx="2.2" ry="2.9" fill-opacity="0.30" transform="rotate(-16 26 497)"/><ellipse cx="290" cy="855" rx="1.0" ry="1.1" fill-opacity="0.31"/><ellipse cx="547" cy="588" rx="2.0" ry="2.6" fill-opacity="0.41" transform="rotate(-6 547 588)"/><ellipse cx="420" cy="436" rx="1.3" ry="1.4" fill-opacity="0.25"/><ellipse cx="68" cy="318" rx="1.5" ry="1.6" fill-opacity="0.29" transform="rotate(5 68 318)"/><ellipse cx="535" cy="159" rx="1.3" ry="1.7" fill-opacity="0.40"/><ellipse cx="262" cy="428" rx="1.5" ry="1.5" fill-opacity="0.28" transform="rotate(-16 262 428)"/><ellipse cx="30" cy="729" rx="0.9" ry="1.3" fill-opacity="0.40"/><ellipse cx="470" cy="523" rx="0.9" ry="0.9" fill-opacity="0.21"/><ellipse cx="375" cy="148" rx="1.5" ry="1.8" fill-opacity="0.36" transform="rotate(-6 375 148)"/><ellipse cx="437" cy="85" rx="1.0" ry="1.3" fill-opacity="0.23"/><ellipse cx="196" cy="8" rx="1.6" ry="1.8" fill-opacity="0.48" transform="rotate(-11 196 8)"/><ellipse cx="516" cy="816" rx="2.0" ry="2.3" fill-opacity="0.25" transform="rotate(-10 516 816)"/><ellipse cx="541" cy="164" rx="1.1" ry="1.2" fill-opacity="0.44"/><ellipse cx="433" cy="765" rx="1.8" ry="2.3" fill-opacity="0.37" transform="rotate(19 433 765)"/><ellipse cx="520" cy="245" rx="1.3" ry="1.9" fill-opacity="0.37"/><ellipse cx="457" cy="55" rx="1.0" ry="1.4" fill-opacity="0.29"/><ellipse cx="18" cy="165" rx="1.8" ry="2.5" fill-opacity="0.29" transform="rotate(-15 18 165)"/><ellipse cx="326" cy="300" rx="0.6" ry="0.8" fill-opacity="0.26"/><ellipse cx="274" cy="448" rx="1.2" ry="1.3" fill-opacity="0.25"/><ellipse cx="566" cy="179" rx="0.9" ry="1.1" fill-opacity="0.43"/><ellipse cx="546" cy="123" rx="1.0" ry="1.2" fill-opacity="0.42"/><ellipse cx="218" cy="100" rx="0.6" ry="0.6" fill-opacity="0.33"/><ellipse cx="499" cy="142" rx="0.7" ry="1.0" fill-opacity="0.37"/><ellipse cx="517" cy="489" rx="0.7" ry="1.0" fill-opacity="0.37"/><ellipse cx="6" cy="421" rx="1.8" ry="1.9" fill-opacity="0.49" transform="rotate(-12 6 421)"/><ellipse cx="57" cy="847" rx="0.7" ry="0.9" fill-opacity="0.37"/><ellipse cx="231" cy="813" rx="1.2" ry="1.7" fill-opacity="0.40"/><ellipse cx="69" cy="620" rx="2.2" ry="2.6" fill-opacity="0.44" transform="rotate(3 69 620)"/><ellipse cx="57" cy="203" rx="2.0" ry="2.3" fill-opacity="0.30" transform="rotate(19 57 203)"/><ellipse cx="125" cy="10" rx="1.3" ry="1.4" fill-opacity="0.28"/><ellipse cx="513" cy="648" rx="0.8" ry="1.0" fill-opacity="0.26"/><ellipse cx="30" cy="826" rx="0.8" ry="0.8" fill-opacity="0.36"/><ellipse cx="571" cy="293" rx="0.9" ry="1.3" fill-opacity="0.47"/><ellipse cx="453" cy="846" rx="0.9" ry="1.2" fill-opacity="0.50"/><ellipse cx="424" cy="798" rx="0.7" ry="0.8" fill-opacity="0.43"/><ellipse cx="131" cy="55" rx="1.0" ry="1.4" fill-opacity="0.28"/><ellipse cx="103" cy="861" rx="0.8" ry="1.0" fill-opacity="0.26"/><ellipse cx="573" cy="733" rx="1.2" ry="1.6" fill-opacity="0.35"/><ellipse cx="539" cy="267" rx="0.8" ry="1.2" fill-opacity="0.41"/><ellipse cx="286" cy="83" rx="2.5" ry="2.7" fill-opacity="0.34" transform="rotate(-10 286 83)"/><ellipse cx="18" cy="564" rx="1.1" ry="1.1" fill-opacity="0.37"/><ellipse cx="48" cy="661" rx="1.0" ry="1.3" fill-opacity="0.34"/><ellipse cx="20" cy="372" rx="0.8" ry="1.1" fill-opacity="0.34"/><ellipse cx="53" cy="492" rx="0.7" ry="0.9" fill-opacity="0.26"/><ellipse cx="46" cy="400" rx="0.8" ry="1.0" fill-opacity="0.42"/><ellipse cx="461" cy="729" rx="0.8" ry="1.1" fill-opacity="0.37"/><ellipse cx="455" cy="101" rx="0.9" ry="1.0" fill-opacity="0.36"/><ellipse cx="1" cy="484" rx="0.9" ry="1.0" fill-opacity="0.26"/><ellipse cx="150" cy="596" rx="0.8" ry="1.0" fill-opacity="0.27"/><ellipse cx="286" cy="849" rx="2.0" ry="2.1" fill-opacity="0.34" transform="rotate(16 286 849)"/><ellipse cx="572" cy="157" rx="1.3" ry="1.4" fill-opacity="0.50"/><ellipse cx="532" cy="418" rx="1.1" ry="1.2" fill-opacity="0.24"/><ellipse cx="16" cy="686" rx="1.4" ry="1.8" fill-opacity="0.43"/><ellipse cx="332" cy="128" rx="1.2" ry="1.7" fill-opacity="0.32"/><ellipse cx="524" cy="590" rx="1.1" ry="1.3" fill-opacity="0.22"/><ellipse cx="182" cy="121" rx="1.8" ry="1.9" fill-opacity="0.29" transform="rotate(-20 182 121)"/><ellipse cx="9" cy="676" rx="3.0" ry="4.3" fill-opacity="0.47" transform="rotate(-15 9 676)"/><ellipse cx="492" cy="39" rx="0.7" ry="0.9" fill-opacity="0.37"/><ellipse cx="474" cy="812" rx="1.4" ry="1.5" fill-opacity="0.48"/><ellipse cx="117" cy="711" rx="1.0" ry="1.0" fill-opacity="0.40"/><ellipse cx="187" cy="77" rx="1.4" ry="1.6" fill-opacity="0.23"/><ellipse cx="472" cy="352" rx="1.2" ry="1.3" fill-opacity="0.19"/><ellipse cx="199" cy="201" rx="0.7" ry="0.8" fill-opacity="0.23"/><ellipse cx="541" cy="475" rx="1.3" ry="1.5" fill-opacity="0.40"/><ellipse cx="221" cy="238" rx="1.0" ry="1.1" fill-opacity="0.29"/><ellipse cx="17" cy="7" rx="0.9" ry="0.9" fill-opacity="0.25"/><ellipse cx="489" cy="789" rx="2.2" ry="3.1" fill-opacity="0.30" transform="rotate(20 489 789)"/><ellipse cx="539" cy="736" rx="1.5" ry="2.1" fill-opacity="0.39" transform="rotate(-23 539 736)"/><ellipse cx="96" cy="497" rx="1.3" ry="1.7" fill-opacity="0.21"/><ellipse cx="562" cy="361" rx="0.7" ry="0.9" fill-opacity="0.40"/><ellipse cx="259" cy="220" rx="1.6" ry="2.3" fill-opacity="0.32" transform="rotate(-19 259 220)"/><ellipse cx="64" cy="294" rx="1.3" ry="1.4" fill-opacity="0.34"/><ellipse cx="11" cy="650" rx="1.4" ry="1.6" fill-opacity="0.30"/><ellipse cx="580" cy="276" rx="0.7" ry="1.0" fill-opacity="0.50"/><ellipse cx="552" cy="581" rx="0.8" ry="1.1" fill-opacity="0.44"/><ellipse cx="60" cy="854" rx="2.5" ry="2.6" fill-opacity="0.40" transform="rotate(-7 60 854)"/><ellipse cx="102" cy="657" rx="0.7" ry="1.0" fill-opacity="0.39"/><ellipse cx="480" cy="500" rx="3.0" ry="4.0" fill-opacity="0.37" transform="rotate(-22 480 500)"/><ellipse cx="28" cy="516" rx="2.2" ry="2.5" fill-opacity="0.29" transform="rotate(-3 28 516)"/><ellipse cx="35" cy="870" rx="1.2" ry="1.6" fill-opacity="0.44"/><ellipse cx="321" cy="96" rx="1.2" ry="1.7" fill-opacity="0.44"/><ellipse cx="566" cy="724" rx="0.8" ry="0.8" fill-opacity="0.43"/><ellipse cx="207" cy="300" rx="2.2" ry="3.0" fill-opacity="0.31" transform="rotate(2 207 300)"/><ellipse cx="31" cy="412" rx="0.7" ry="1.0" fill-opacity="0.49"/><ellipse cx="269" cy="13" rx="2.0" ry="2.8" fill-opacity="0.29" transform="rotate(-7 269 13)"/><ellipse cx="36" cy="570" rx="1.3" ry="1.6" fill-opacity="0.49"/><ellipse cx="452" cy="875" rx="2.0" ry="2.0" fill-opacity="0.35" transform="rotate(-9 452 875)"/><ellipse cx="206" cy="876" rx="1.0" ry="1.4" fill-opacity="0.26"/><ellipse cx="435" cy="657" rx="1.4" ry="1.9" fill-opacity="0.25"/><ellipse cx="572" cy="173" rx="1.0" ry="1.2" fill-opacity="0.33"/><ellipse cx="78" cy="274" rx="1.1" ry="1.5" fill-opacity="0.23"/><ellipse cx="579" cy="685" rx="1.6" ry="1.9" fill-opacity="0.27" transform="rotate(-2 579 685)"/><ellipse cx="35" cy="389" rx="3.0" ry="3.4" fill-opacity="0.41" transform="rotate(-14 35 389)"/><ellipse cx="520" cy="814" rx="1.1" ry="1.4" fill-opacity="0.26"/><ellipse cx="58" cy="838" rx="2.5" ry="3.2" fill-opacity="0.44" transform="rotate(16 58 838)"/><ellipse cx="77" cy="746" rx="3.0" ry="3.6" fill-opacity="0.35" transform="rotate(-24 77 746)"/><ellipse cx="409" cy="35" rx="1.3" ry="1.4" fill-opacity="0.42"/><ellipse cx="111" cy="1" rx="1.6" ry="1.9" fill-opacity="0.38" transform="rotate(20 111 1)"/><ellipse cx="583" cy="240" rx="0.6" ry="0.6" fill-opacity="0.28"/><ellipse cx="60" cy="26" rx="1.4" ry="1.8" fill-opacity="0.25"/><ellipse cx="536" cy="815" rx="0.7" ry="1.0" fill-opacity="0.46"/><ellipse cx="100" cy="603" rx="1.1" ry="1.5" fill-opacity="0.37"/><ellipse cx="555" cy="211" rx="1.0" ry="1.2" fill-opacity="0.26"/><ellipse cx="258" cy="713" rx="0.8" ry="0.9" fill-opacity="0.23"/><ellipse cx="2" cy="489" rx="2.5" ry="2.7" fill-opacity="0.37" transform="rotate(-1 2 489)"/><ellipse cx="572" cy="110" rx="1.0" ry="1.0" fill-opacity="0.39"/><ellipse cx="244" cy="44" rx="2.0" ry="2.8" fill-opacity="0.46" transform="rotate(-6 244 44)"/><ellipse cx="576" cy="150" rx="1.5" ry="1.5" fill-opacity="0.30" transform="rotate(-19 576 150)"/><ellipse cx="49" cy="710" rx="1.3" ry="1.9" fill-opacity="0.34"/><ellipse cx="166" cy="21" rx="1.8" ry="2.0" fill-opacity="0.28" transform="rotate(-18 166 21)"/><ellipse cx="287" cy="25" rx="2.2" ry="2.9" fill-opacity="0.48" transform="rotate(19 287 25)"/><ellipse cx="486" cy="280" rx="1.3" ry="1.6" fill-opacity="0.35"/><ellipse cx="567" cy="668" rx="1.0" ry="1.2" fill-opacity="0.32"/><ellipse cx="520" cy="503" rx="1.5" ry="1.5" fill-opacity="0.35" transform="rotate(-2 520 503)"/><ellipse cx="47" cy="369" rx="3.0" ry="3.5" fill-opacity="0.24" transform="rotate(0 47 369)"/><ellipse cx="465" cy="836" rx="1.8" ry="1.9" fill-opacity="0.35" transform="rotate(-2 465 836)"/><ellipse cx="37" cy="106" rx="1.2" ry="1.3" fill-opacity="0.27"/><ellipse cx="43" cy="393" rx="1.0" ry="1.3" fill-opacity="0.46"/><ellipse cx="334" cy="481" rx="1.1" ry="1.5" fill-opacity="0.21"/><ellipse cx="346" cy="229" rx="1.5" ry="2.1" fill-opacity="0.22" transform="rotate(1 346 229)"/><ellipse cx="54" cy="731" rx="2.0" ry="2.5" fill-opacity="0.23" transform="rotate(-13 54 731)"/><ellipse cx="360" cy="805" rx="1.0" ry="1.3" fill-opacity="0.41"/><ellipse cx="124" cy="486" rx="1.5" ry="1.7" fill-opacity="0.28" transform="rotate(7 124 486)"/><ellipse cx="182" cy="100" rx="1.8" ry="1.9" fill-opacity="0.27" transform="rotate(-15 182 100)"/><ellipse cx="393" cy="791" rx="0.9" ry="1.3" fill-opacity="0.31"/><ellipse cx="488" cy="866" rx="1.0" ry="1.3" fill-opacity="0.41"/><ellipse cx="132" cy="24" rx="1.2" ry="1.6" fill-opacity="0.28"/><ellipse cx="521" cy="724" rx="0.9" ry="1.1" fill-opacity="0.37"/><ellipse cx="554" cy="259" rx="1.4" ry="1.7" fill-opacity="0.48"/><ellipse cx="483" cy="7" rx="0.9" ry="1.0" fill-opacity="0.39"/><ellipse cx="342" cy="861" rx="1.5" ry="1.6" fill-opacity="0.45" transform="rotate(-10 342 861)"/><ellipse cx="92" cy="387" rx="1.1" ry="1.5" fill-opacity="0.31"/><ellipse cx="390" cy="494" rx="2.2" ry="2.2" fill-opacity="0.23" transform="rotate(-1 390 494)"/><ellipse cx="363" cy="263" rx="0.8" ry="1.1" fill-opacity="0.18"/><ellipse cx="302" cy="880" rx="1.3" ry="1.9" fill-opacity="0.24"/><ellipse cx="96" cy="314" rx="0.8" ry="1.2" fill-opacity="0.32"/><ellipse cx="2" cy="498" rx="0.9" ry="1.1" fill-opacity="0.51"/><ellipse cx="320" cy="766" rx="2.0" ry="2.3" fill-opacity="0.26" transform="rotate(-0 320 766)"/><ellipse cx="259" cy="184" rx="1.1" ry="1.2" fill-opacity="0.29"/><ellipse cx="139" cy="863" rx="1.1" ry="1.3" fill-opacity="0.34"/><ellipse cx="291" cy="877" rx="1.8" ry="2.5" fill-opacity="0.31" transform="rotate(-3 291 877)"/><ellipse cx="9" cy="47" rx="1.0" ry="1.4" fill-opacity="0.51"/><ellipse cx="427" cy="212" rx="0.7" ry="0.8" fill-opacity="0.30"/><ellipse cx="54" cy="213" rx="1.4" ry="1.5" fill-opacity="0.32"/><ellipse cx="545" cy="232" rx="0.7" ry="1.0" fill-opacity="0.32"/><ellipse cx="298" cy="157" rx="2.0" ry="2.8" fill-opacity="0.39" transform="rotate(-20 298 157)"/><ellipse cx="26" cy="26" rx="1.6" ry="1.7" fill-opacity="0.36" transform="rotate(9 26 26)"/><ellipse cx="582" cy="549" rx="1.5" ry="2.0" fill-opacity="0.30" transform="rotate(-4 582 549)"/><ellipse cx="309" cy="17" rx="0.8" ry="0.9" fill-opacity="0.26"/><ellipse cx="148" cy="7" rx="3.0" ry="3.6" fill-opacity="0.50" transform="rotate(13 148 7)"/><ellipse cx="385" cy="814" rx="1.1" ry="1.5" fill-opacity="0.24"/><ellipse cx="176" cy="732" rx="1.6" ry="1.9" fill-opacity="0.24" transform="rotate(-13 176 732)"/><ellipse cx="61" cy="434" rx="1.0" ry="1.3" fill-opacity="0.32"/><ellipse cx="80" cy="492" rx="3.0" ry="4.0" fill-opacity="0.20" transform="rotate(8 80 492)"/><ellipse cx="27" cy="677" rx="1.0" ry="1.2" fill-opacity="0.24"/><ellipse cx="273" cy="15" rx="0.9" ry="1.0" fill-opacity="0.39"/><ellipse cx="323" cy="219" rx="2.2" ry="2.8" fill-opacity="0.21" transform="rotate(-17 323 219)"/><ellipse cx="101" cy="797" rx="0.8" ry="0.9" fill-opacity="0.31"/><ellipse cx="568" cy="396" rx="2.0" ry="2.2" fill-opacity="0.32" transform="rotate(-12 568 396)"/><ellipse cx="136" cy="709" rx="1.0" ry="1.1" fill-opacity="0.19"/><ellipse cx="556" cy="121" rx="0.7" ry="0.8" fill-opacity="0.46"/><ellipse cx="515" cy="60" rx="2.0" ry="2.7" fill-opacity="0.42" transform="rotate(17 515 60)"/><ellipse cx="104" cy="445" rx="1.2" ry="1.4" fill-opacity="0.22"/><ellipse cx="388" cy="822" rx="0.7" ry="0.9" fill-opacity="0.49"/><ellipse cx="305" cy="661" rx="1.1" ry="1.1" fill-opacity="0.28"/><ellipse cx="367" cy="755" rx="1.0" ry="1.1" fill-opacity="0.33"/><ellipse cx="82" cy="331" rx="2.2" ry="2.5" fill-opacity="0.40" transform="rotate(17 82 331)"/><ellipse cx="143" cy="841" rx="0.9" ry="0.9" fill-opacity="0.26"/><ellipse cx="170" cy="693" rx="0.9" ry="1.3" fill-opacity="0.26"/><ellipse cx="544" cy="365" rx="0.7" ry="0.9" fill-opacity="0.23"/><ellipse cx="210" cy="856" rx="1.2" ry="1.6" fill-opacity="0.24"/><ellipse cx="47" cy="826" rx="2.2" ry="2.6" fill-opacity="0.41" transform="rotate(23 47 826)"/><ellipse cx="560" cy="308" rx="1.5" ry="1.9" fill-opacity="0.44" transform="rotate(21 560 308)"/><ellipse cx="403" cy="31" rx="0.8" ry="1.0" fill-opacity="0.42"/><ellipse cx="154" cy="385" rx="1.0" ry="1.2" fill-opacity="0.26"/><ellipse cx="25" cy="260" rx="1.2" ry="1.4" fill-opacity="0.37"/><ellipse cx="1" cy="53" rx="1.0" ry="1.4" fill-opacity="0.39"/><ellipse cx="399" cy="92" rx="1.8" ry="1.9" fill-opacity="0.37" transform="rotate(20 399 92)"/><ellipse cx="571" cy="856" rx="1.1" ry="1.5" fill-opacity="0.45"/><ellipse cx="15" cy="414" rx="1.5" ry="1.6" fill-opacity="0.43" transform="rotate(-21 15 414)"/><ellipse cx="27" cy="715" rx="1.0" ry="1.2" fill-opacity="0.38"/><ellipse cx="115" cy="702" rx="0.7" ry="0.9" fill-opacity="0.38"/><ellipse cx="550" cy="418" rx="1.4" ry="1.5" fill-opacity="0.28"/><ellipse cx="289" cy="769" rx="2.0" ry="2.2" fill-opacity="0.22" transform="rotate(12 289 769)"/><ellipse cx="391" cy="819" rx="0.8" ry="1.0" fill-opacity="0.40"/><ellipse cx="433" cy="272" rx="3.0" ry="3.9" fill-opacity="0.17" transform="rotate(-22 433 272)"/><ellipse cx="107" cy="263" rx="2.2" ry="2.8" fill-opacity="0.31" transform="rotate(-21 107 263)"/><ellipse cx="213" cy="647" rx="0.7" ry="0.7" fill-opacity="0.22"/><ellipse cx="548" cy="864" rx="3.0" ry="4.0" fill-opacity="0.28" transform="rotate(13 548 864)"/><ellipse cx="157" cy="67" rx="1.0" ry="1.3" fill-opacity="0.47"/><ellipse cx="203" cy="25" rx="1.8" ry="2.3" fill-opacity="0.50" transform="rotate(22 203 25)"/><ellipse cx="416" cy="845" rx="1.1" ry="1.2" fill-opacity="0.49"/><ellipse cx="554" cy="818" rx="0.8" ry="0.8" fill-opacity="0.46"/><ellipse cx="120" cy="13" rx="0.7" ry="0.9" fill-opacity="0.30"/><ellipse cx="316" cy="874" rx="1.3" ry="1.5" fill-opacity="0.39"/><ellipse cx="91" cy="427" rx="1.6" ry="2.3" fill-opacity="0.40" transform="rotate(-15 91 427)"/><ellipse cx="550" cy="447" rx="2.0" ry="2.8" fill-opacity="0.37" transform="rotate(24 550 447)"/><ellipse cx="464" cy="317" rx="2.0" ry="2.9" fill-opacity="0.19" transform="rotate(21 464 317)"/><ellipse cx="394" cy="840" rx="1.4" ry="1.7" fill-opacity="0.45"/><ellipse cx="187" cy="46" rx="1.1" ry="1.1" fill-opacity="0.31"/><ellipse cx="567" cy="71" rx="2.0" ry="2.9" fill-opacity="0.32" transform="rotate(24 567 71)"/><ellipse cx="56" cy="545" rx="3.0" ry="4.1" fill-opacity="0.24" transform="rotate(22 56 545)"/><ellipse cx="536" cy="469" rx="0.8" ry="1.1" fill-opacity="0.35"/><ellipse cx="331" cy="151" rx="0.7" ry="0.8" fill-opacity="0.27"/><ellipse cx="42" cy="418" rx="1.0" ry="1.3" fill-opacity="0.38"/><ellipse cx="44" cy="374" rx="1.6" ry="1.7" fill-opacity="0.39" transform="rotate(-2 44 374)"/><ellipse cx="9" cy="454" rx="0.8" ry="1.1" fill-opacity="0.35"/><ellipse cx="532" cy="425" rx="0.8" ry="0.9" fill-opacity="0.26"/><ellipse cx="56" cy="806" rx="1.2" ry="1.5" fill-opacity="0.50"/><ellipse cx="1" cy="170" rx="1.5" ry="2.1" fill-opacity="0.43" transform="rotate(15 1 170)"/><ellipse cx="500" cy="188" rx="1.8" ry="2.2" fill-opacity="0.34" transform="rotate(-12 500 188)"/><ellipse cx="552" cy="353" rx="1.0" ry="1.3" fill-opacity="0.25"/><ellipse cx="513" cy="847" rx="1.4" ry="1.4" fill-opacity="0.41"/><ellipse cx="211" cy="273" rx="1.0" ry="1.0" fill-opacity="0.23"/><ellipse cx="117" cy="880" rx="1.1" ry="1.3" fill-opacity="0.46"/><ellipse cx="206" cy="153" rx="0.8" ry="0.8" fill-opacity="0.25"/><ellipse cx="466" cy="37" rx="0.8" ry="1.0" fill-opacity="0.44"/><ellipse cx="404" cy="811" rx="2.2" ry="2.7" fill-opacity="0.47" transform="rotate(-7 404 811)"/><ellipse cx="309" cy="210" rx="1.6" ry="2.1" fill-opacity="0.22" transform="rotate(7 309 210)"/><ellipse cx="1" cy="184" rx="1.2" ry="1.6" fill-opacity="0.38"/><ellipse cx="545" cy="345" rx="1.5" ry="1.9" fill-opacity="0.39" transform="rotate(6 545 345)"/><ellipse cx="42" cy="187" rx="1.6" ry="1.8" fill-opacity="0.48" transform="rotate(-1 42 187)"/><ellipse cx="520" cy="638" rx="2.2" ry="2.3" fill-opacity="0.44" transform="rotate(23 520 638)"/><ellipse cx="463" cy="862" rx="2.0" ry="2.2" fill-opacity="0.32" transform="rotate(1 463 862)"/><ellipse cx="216" cy="53" rx="1.3" ry="1.4" fill-opacity="0.45"/><ellipse cx="573" cy="319" rx="0.7" ry="1.0" fill-opacity="0.25"/><ellipse cx="550" cy="54" rx="2.0" ry="2.8" fill-opacity="0.50" transform="rotate(2 550 54)"/><ellipse cx="582" cy="32" rx="1.0" ry="1.0" fill-opacity="0.42"/><ellipse cx="343" cy="640" rx="0.7" ry="0.8" fill-opacity="0.16"/><ellipse cx="336" cy="517" rx="0.7" ry="0.9" fill-opacity="0.30"/><ellipse cx="74" cy="544" rx="1.8" ry="2.5" fill-opacity="0.40" transform="rotate(-17 74 544)"/><ellipse cx="397" cy="202" rx="1.5" ry="1.5" fill-opacity="0.35" transform="rotate(17 397 202)"/><ellipse cx="67" cy="202" rx="0.8" ry="1.1" fill-opacity="0.41"/><ellipse cx="363" cy="114" rx="0.7" ry="1.0" fill-opacity="0.22"/><ellipse cx="261" cy="752" rx="1.1" ry="1.2" fill-opacity="0.31"/><ellipse cx="24" cy="25" rx="1.3" ry="1.6" fill-opacity="0.47"/><ellipse cx="239" cy="640" rx="1.3" ry="1.4" fill-opacity="0.19"/><ellipse cx="16" cy="304" rx="0.9" ry="1.0" fill-opacity="0.30"/><ellipse cx="78" cy="166" rx="1.4" ry="1.5" fill-opacity="0.31"/><ellipse cx="45" cy="50" rx="0.9" ry="0.9" fill-opacity="0.36"/><ellipse cx="75" cy="772" rx="1.1" ry="1.4" fill-opacity="0.24"/><ellipse cx="56" cy="111" rx="1.1" ry="1.6" fill-opacity="0.25"/><ellipse cx="64" cy="246" rx="2.0" ry="2.2" fill-opacity="0.41" transform="rotate(24 64 246)"/><ellipse cx="358" cy="34" rx="2.2" ry="2.9" fill-opacity="0.44" transform="rotate(-24 358 34)"/><ellipse cx="548" cy="263" rx="1.5" ry="1.6" fill-opacity="0.36" transform="rotate(20 548 263)"/><ellipse cx="414" cy="2" rx="1.0" ry="1.2" fill-opacity="0.29"/><ellipse cx="28" cy="354" rx="1.2" ry="1.5" fill-opacity="0.46"/><ellipse cx="154" cy="682" rx="0.8" ry="1.1" fill-opacity="0.25"/><ellipse cx="294" cy="729" rx="1.2" ry="1.7" fill-opacity="0.28"/><ellipse cx="310" cy="703" rx="0.9" ry="1.1" fill-opacity="0.24"/><ellipse cx="578" cy="121" rx="0.8" ry="1.1" fill-opacity="0.25"/><ellipse cx="475" cy="83" rx="2.5" ry="3.4" fill-opacity="0.33" transform="rotate(-9 475 83)"/><ellipse cx="54" cy="439" rx="0.7" ry="0.9" fill-opacity="0.29"/><ellipse cx="580" cy="804" rx="1.1" ry="1.5" fill-opacity="0.45"/><ellipse cx="527" cy="329" rx="0.7" ry="0.8" fill-opacity="0.23"/><ellipse cx="45" cy="113" rx="1.3" ry="1.7" fill-opacity="0.25"/><ellipse cx="530" cy="49" rx="1.1" ry="1.1" fill-opacity="0.46"/><ellipse cx="296" cy="768" rx="0.7" ry="0.8" fill-opacity="0.37"/><ellipse cx="271" cy="33" rx="1.0" ry="1.2" fill-opacity="0.47"/><ellipse cx="576" cy="89" rx="2.5" ry="3.4" fill-opacity="0.49" transform="rotate(4 576 89)"/><ellipse cx="512" cy="749" rx="1.2" ry="1.4" fill-opacity="0.24"/><ellipse cx="561" cy="56" rx="2.0" ry="2.2" fill-opacity="0.34" transform="rotate(8 561 56)"/><ellipse cx="46" cy="466" rx="0.9" ry="1.1" fill-opacity="0.46"/><ellipse cx="383" cy="26" rx="1.4" ry="1.6" fill-opacity="0.34"/><ellipse cx="51" cy="103" rx="1.8" ry="2.4" fill-opacity="0.42" transform="rotate(-15 51 103)"/><ellipse cx="299" cy="15" rx="0.7" ry="0.8" fill-opacity="0.47"/><ellipse cx="428" cy="69" rx="0.6" ry="0.9" fill-opacity="0.26"/><ellipse cx="535" cy="121" rx="1.0" ry="1.1" fill-opacity="0.24"/><ellipse cx="564" cy="817" rx="1.1" ry="1.4" fill-opacity="0.26"/><ellipse cx="20" cy="638" rx="2.0" ry="2.4" fill-opacity="0.43" transform="rotate(4 20 638)"/><ellipse cx="544" cy="505" rx="1.3" ry="1.7" fill-opacity="0.40"/><ellipse cx="447" cy="842" rx="1.3" ry="1.6" fill-opacity="0.49"/><ellipse cx="7" cy="282" rx="0.9" ry="1.0" fill-opacity="0.42"/><ellipse cx="25" cy="609" rx="1.2" ry="1.6" fill-opacity="0.39"/><ellipse cx="45" cy="476" rx="1.4" ry="1.4" fill-opacity="0.41"/><ellipse cx="199" cy="863" rx="3.0" ry="3.3" fill-opacity="0.47" transform="rotate(18 199 863)"/><ellipse cx="443" cy="145" rx="2.2" ry="3.1" fill-opacity="0.28" transform="rotate(-1 443 145)"/><ellipse cx="568" cy="437" rx="0.6" ry="0.8" fill-opacity="0.27"/><ellipse cx="535" cy="392" rx="1.0" ry="1.0" fill-opacity="0.46"/><ellipse cx="359" cy="733" rx="1.0" ry="1.4" fill-opacity="0.34"/><ellipse cx="346" cy="365" rx="1.3" ry="1.8" fill-opacity="0.22"/><ellipse cx="14" cy="20" rx="1.2" ry="1.3" fill-opacity="0.41"/><ellipse cx="277" cy="53" rx="1.3" ry="1.5" fill-opacity="0.27"/><ellipse cx="294" cy="841" rx="2.0" ry="2.8" fill-opacity="0.46" transform="rotate(17 294 841)"/><ellipse cx="503" cy="183" rx="1.6" ry="1.7" fill-opacity="0.40" transform="rotate(-7 503 183)"/><ellipse cx="150" cy="849" rx="1.3" ry="1.8" fill-opacity="0.32"/><ellipse cx="97" cy="256" rx="1.3" ry="1.5" fill-opacity="0.21"/><ellipse cx="281" cy="864" rx="0.9" ry="1.2" fill-opacity="0.33"/><ellipse cx="295" cy="221" rx="0.9" ry="1.0" fill-opacity="0.25"/><ellipse cx="66" cy="645" rx="1.2" ry="1.2" fill-opacity="0.31"/><ellipse cx="77" cy="813" rx="1.3" ry="1.6" fill-opacity="0.24"/><ellipse cx="15" cy="540" rx="1.4" ry="2.0" fill-opacity="0.43"/><ellipse cx="577" cy="814" rx="1.6" ry="2.3" fill-opacity="0.36" transform="rotate(17 577 814)"/><ellipse cx="104" cy="796" rx="1.1" ry="1.2" fill-opacity="0.37"/><ellipse cx="570" cy="472" rx="1.0" ry="1.2" fill-opacity="0.48"/><ellipse cx="418" cy="589" rx="1.4" ry="1.7" fill-opacity="0.28"/><ellipse cx="323" cy="704" rx="1.3" ry="1.8" fill-opacity="0.29"/><ellipse cx="38" cy="809" rx="0.8" ry="1.0" fill-opacity="0.43"/><ellipse cx="47" cy="699" rx="1.4" ry="1.7" fill-opacity="0.27"/><ellipse cx="43" cy="45" rx="1.8" ry="2.2" fill-opacity="0.32" transform="rotate(-2 43 45)"/><ellipse cx="568" cy="136" rx="2.0" ry="2.1" fill-opacity="0.39" transform="rotate(-2 568 136)"/><ellipse cx="481" cy="595" rx="0.7" ry="1.0" fill-opacity="0.23"/><ellipse cx="408" cy="58" rx="1.1" ry="1.5" fill-opacity="0.29"/><ellipse cx="446" cy="746" rx="1.2" ry="1.2" fill-opacity="0.29"/><ellipse cx="125" cy="833" rx="1.0" ry="1.4" fill-opacity="0.46"/><ellipse cx="35" cy="883" rx="0.9" ry="1.1" fill-opacity="0.28"/><ellipse cx="500" cy="830" rx="1.3" ry="1.5" fill-opacity="0.24"/><ellipse cx="301" cy="762" rx="0.7" ry="1.0" fill-opacity="0.32"/><ellipse cx="66" cy="794" rx="1.0" ry="1.2" fill-opacity="0.30"/><ellipse cx="550" cy="836" rx="1.2" ry="1.4" fill-opacity="0.39"/><ellipse cx="385" cy="245" rx="1.0" ry="1.4" fill-opacity="0.28"/><ellipse cx="542" cy="498" rx="1.3" ry="1.5" fill-opacity="0.38"/><ellipse cx="183" cy="15" rx="1.0" ry="1.4" fill-opacity="0.34"/><ellipse cx="359" cy="309" rx="1.6" ry="1.8" fill-opacity="0.27" transform="rotate(8 359 309)"/><ellipse cx="7" cy="732" rx="3.0" ry="4.2" fill-opacity="0.41" transform="rotate(3 7 732)"/><ellipse cx="534" cy="528" rx="1.3" ry="1.5" fill-opacity="0.43"/><ellipse cx="300" cy="88" rx="2.0" ry="2.1" fill-opacity="0.38" transform="rotate(1 300 88)"/><ellipse cx="152" cy="784" rx="1.5" ry="1.9" fill-opacity="0.30" transform="rotate(-22 152 784)"/><ellipse cx="10" cy="774" rx="0.7" ry="0.9" fill-opacity="0.31"/><ellipse cx="169" cy="29" rx="1.5" ry="1.5" fill-opacity="0.25" transform="rotate(19 169 29)"/><ellipse cx="541" cy="360" rx="1.5" ry="1.9" fill-opacity="0.38" transform="rotate(14 541 360)"/><ellipse cx="153" cy="334" rx="3.0" ry="4.3" fill-opacity="0.18" transform="rotate(8 153 334)"/><ellipse cx="88" cy="716" rx="0.8" ry="1.1" fill-opacity="0.35"/><ellipse cx="252" cy="783" rx="1.1" ry="1.1" fill-opacity="0.34"/><ellipse cx="6" cy="800" rx="2.5" ry="3.2" fill-opacity="0.27" transform="rotate(2 6 800)"/><ellipse cx="116" cy="104" rx="0.8" ry="1.0" fill-opacity="0.40"/><ellipse cx="467" cy="756" rx="0.8" ry="1.0" fill-opacity="0.35"/><ellipse cx="280" cy="395" rx="1.8" ry="2.5" fill-opacity="0.16" transform="rotate(-8 280 395)"/><ellipse cx="574" cy="604" rx="2.2" ry="2.7" fill-opacity="0.29" transform="rotate(-2 574 604)"/><ellipse cx="576" cy="49" rx="1.3" ry="1.8" fill-opacity="0.27"/><ellipse cx="9" cy="115" rx="3.0" ry="3.1" fill-opacity="0.43" transform="rotate(-2 9 115)"/><ellipse cx="568" cy="648" rx="0.9" ry="1.3" fill-opacity="0.36"/><ellipse cx="476" cy="472" rx="3.0" ry="4.1" fill-opacity="0.22" transform="rotate(-17 476 472)"/><ellipse cx="289" cy="847" rx="2.5" ry="3.0" fill-opacity="0.32" transform="rotate(19 289 847)"/><ellipse cx="458" cy="115" rx="2.5" ry="3.3" fill-opacity="0.39" transform="rotate(0 458 115)"/><ellipse cx="451" cy="428" rx="1.4" ry="1.8" fill-opacity="0.23"/><ellipse cx="60" cy="650" rx="1.6" ry="1.9" fill-opacity="0.30" transform="rotate(10 60 650)"/><ellipse cx="336" cy="254" rx="1.2" ry="1.7" fill-opacity="0.28"/><ellipse cx="539" cy="102" rx="1.3" ry="1.4" fill-opacity="0.28"/><ellipse cx="12" cy="462" rx="2.0" ry="2.2" fill-opacity="0.41" transform="rotate(-22 12 462)"/><ellipse cx="340" cy="55" rx="1.0" ry="1.0" fill-opacity="0.33"/><ellipse cx="493" cy="16" rx="3.0" ry="3.2" fill-opacity="0.43" transform="rotate(22 493 16)"/><ellipse cx="98" cy="653" rx="0.7" ry="0.9" fill-opacity="0.37"/><ellipse cx="31" cy="795" rx="0.6" ry="0.8" fill-opacity="0.45"/><ellipse cx="97" cy="187" rx="1.1" ry="1.5" fill-opacity="0.37"/><ellipse cx="408" cy="688" rx="2.2" ry="2.6" fill-opacity="0.32" transform="rotate(24 408 688)"/><ellipse cx="259" cy="840" rx="1.4" ry="1.7" fill-opacity="0.50"/><ellipse cx="507" cy="796" rx="0.9" ry="1.1" fill-opacity="0.37"/><ellipse cx="532" cy="873" rx="1.6" ry="1.8" fill-opacity="0.26" transform="rotate(-10 532 873)"/><ellipse cx="231" cy="32" rx="1.8" ry="1.9" fill-opacity="0.35" transform="rotate(-18 231 32)"/><ellipse cx="557" cy="490" rx="1.3" ry="1.5" fill-opacity="0.40"/><ellipse cx="469" cy="200" rx="1.5" ry="2.1" fill-opacity="0.39" transform="rotate(2 469 200)"/><ellipse cx="45" cy="399" rx="2.2" ry="2.3" fill-opacity="0.27" transform="rotate(10 45 399)"/><ellipse cx="76" cy="882" rx="0.9" ry="1.1" fill-opacity="0.49"/><ellipse cx="22" cy="75" rx="0.9" ry="1.2" fill-opacity="0.32"/><ellipse cx="270" cy="225" rx="0.8" ry="1.0" fill-opacity="0.19"/><ellipse cx="284" cy="820" rx="1.0" ry="1.1" fill-opacity="0.36"/><ellipse cx="510" cy="173" rx="1.2" ry="1.7" fill-opacity="0.46"/><ellipse cx="399" cy="706" rx="0.9" ry="0.9" fill-opacity="0.25"/><ellipse cx="513" cy="275" rx="2.0" ry="2.2" fill-opacity="0.42" transform="rotate(16 513 275)"/><ellipse cx="156" cy="701" rx="1.5" ry="1.8" fill-opacity="0.25" transform="rotate(1 156 701)"/><ellipse cx="119" cy="321" rx="2.5" ry="2.7" fill-opacity="0.32" transform="rotate(-4 119 321)"/><ellipse cx="67" cy="514" rx="1.1" ry="1.4" fill-opacity="0.25"/><ellipse cx="273" cy="635" rx="0.7" ry="0.9" fill-opacity="0.18"/><ellipse cx="90" cy="553" rx="2.2" ry="3.0" fill-opacity="0.39" transform="rotate(-6 90 553)"/><ellipse cx="18" cy="158" rx="1.6" ry="2.0" fill-opacity="0.25" transform="rotate(25 18 158)"/><ellipse cx="522" cy="94" rx="2.2" ry="2.6" fill-opacity="0.48" transform="rotate(14 522 94)"/><ellipse cx="35" cy="339" rx="1.0" ry="1.4" fill-opacity="0.30"/><ellipse cx="63" cy="782" rx="1.1" ry="1.6" fill-opacity="0.31"/><ellipse cx="114" cy="358" rx="1.1" ry="1.3" fill-opacity="0.31"/><ellipse cx="578" cy="410" rx="0.9" ry="1.2" fill-opacity="0.49"/><ellipse cx="274" cy="470" rx="3.0" ry="3.7" fill-opacity="0.28" transform="rotate(21 274 470)"/><ellipse cx="440" cy="588" rx="1.2" ry="1.2" fill-opacity="0.20"/><ellipse cx="157" cy="148" rx="0.9" ry="1.2" fill-opacity="0.41"/><ellipse cx="78" cy="384" rx="0.9" ry="1.0" fill-opacity="0.32"/><ellipse cx="330" cy="850" rx="2.0" ry="2.7" fill-opacity="0.47" transform="rotate(25 330 850)"/><ellipse cx="34" cy="852" rx="1.0" ry="1.1" fill-opacity="0.31"/><ellipse cx="75" cy="331" rx="1.6" ry="2.2" fill-opacity="0.25" transform="rotate(-19 75 331)"/><ellipse cx="27" cy="497" rx="1.1" ry="1.5" fill-opacity="0.30"/><ellipse cx="566" cy="230" rx="1.2" ry="1.4" fill-opacity="0.28"/><ellipse cx="206" cy="203" rx="1.5" ry="1.7" fill-opacity="0.22" transform="rotate(17 206 203)"/><ellipse cx="567" cy="486" rx="1.6" ry="1.6" fill-opacity="0.45" transform="rotate(-11 567 486)"/><ellipse cx="488" cy="420" rx="1.8" ry="1.9" fill-opacity="0.23" transform="rotate(10 488 420)"/><ellipse cx="577" cy="624" rx="0.6" ry="0.8" fill-opacity="0.36"/><ellipse cx="530" cy="723" rx="1.0" ry="1.4" fill-opacity="0.23"/><ellipse cx="366" cy="51" rx="0.8" ry="1.2" fill-opacity="0.32"/><ellipse cx="75" cy="635" rx="0.9" ry="1.0" fill-opacity="0.37"/><ellipse cx="585" cy="57" rx="1.8" ry="2.0" fill-opacity="0.33" transform="rotate(-13 585 57)"/><ellipse cx="576" cy="871" rx="1.0" ry="1.1" fill-opacity="0.34"/><ellipse cx="585" cy="864" rx="2.5" ry="2.6" fill-opacity="0.28" transform="rotate(-24 585 864)"/><ellipse cx="51" cy="39" rx="1.3" ry="1.7" fill-opacity="0.46"/><ellipse cx="45" cy="107" rx="1.0" ry="1.1" fill-opacity="0.33"/><ellipse cx="517" cy="792" rx="0.9" ry="1.2" fill-opacity="0.28"/><ellipse cx="112" cy="691" rx="0.9" ry="1.0" fill-opacity="0.33"/><ellipse cx="524" cy="207" rx="0.7" ry="0.8" fill-opacity="0.45"/><ellipse cx="489" cy="668" rx="2.2" ry="2.2" fill-opacity="0.27" transform="rotate(-12 489 668)"/><ellipse cx="321" cy="568" rx="0.9" ry="1.2" fill-opacity="0.20"/><ellipse cx="481" cy="315" rx="0.9" ry="1.1" fill-opacity="0.36"/><ellipse cx="505" cy="140" rx="0.8" ry="1.0" fill-opacity="0.33"/><ellipse cx="140" cy="164" rx="1.5" ry="2.1" fill-opacity="0.35" transform="rotate(1 140 164)"/><ellipse cx="94" cy="653" rx="0.8" ry="0.8" fill-opacity="0.29"/><ellipse cx="7" cy="693" rx="1.0" ry="1.2" fill-opacity="0.35"/><ellipse cx="581" cy="154" rx="0.9" ry="0.9" fill-opacity="0.36"/><ellipse cx="36" cy="48" rx="2.5" ry="2.7" fill-opacity="0.40" transform="rotate(6 36 48)"/><ellipse cx="154" cy="270" rx="1.0" ry="1.3" fill-opacity="0.28"/><ellipse cx="40" cy="216" rx="0.6" ry="0.7" fill-opacity="0.37"/><ellipse cx="15" cy="342" rx="1.3" ry="1.4" fill-opacity="0.34"/><ellipse cx="539" cy="717" rx="1.4" ry="1.6" fill-opacity="0.26"/><ellipse cx="277" cy="835" rx="1.1" ry="1.5" fill-opacity="0.28"/><ellipse cx="405" cy="601" rx="1.3" ry="1.7" fill-opacity="0.21"/><ellipse cx="4" cy="422" rx="3.0" ry="4.1" fill-opacity="0.34" transform="rotate(0 4 422)"/><ellipse cx="518" cy="443" rx="0.9" ry="1.0" fill-opacity="0.26"/><ellipse cx="159" cy="799" rx="1.0" ry="1.0" fill-opacity="0.43"/><ellipse cx="584" cy="441" rx="1.2" ry="1.2" fill-opacity="0.33"/><ellipse cx="545" cy="353" rx="0.6" ry="0.8" fill-opacity="0.36"/><ellipse cx="45" cy="776" rx="1.2" ry="1.7" fill-opacity="0.38"/><ellipse cx="315" cy="194" rx="1.0" ry="1.3" fill-opacity="0.24"/><ellipse cx="77" cy="39" rx="1.4" ry="1.7" fill-opacity="0.46"/><ellipse cx="568" cy="99" rx="0.6" ry="0.8" fill-opacity="0.43"/><ellipse cx="191" cy="0" rx="1.1" ry="1.3" fill-opacity="0.46"/><ellipse cx="437" cy="522" rx="1.3" ry="1.5" fill-opacity="0.21"/><ellipse cx="511" cy="388" rx="1.3" ry="1.6" fill-opacity="0.31"/><ellipse cx="179" cy="20" rx="0.9" ry="1.0" fill-opacity="0.42"/><ellipse cx="575" cy="495" rx="1.6" ry="2.3" fill-opacity="0.51" transform="rotate(-14 575 495)"/><ellipse cx="179" cy="871" rx="0.7" ry="0.9" fill-opacity="0.50"/><ellipse cx="448" cy="612" rx="2.5" ry="3.6" fill-opacity="0.32" transform="rotate(17 448 612)"/><ellipse cx="237" cy="768" rx="0.8" ry="1.0" fill-opacity="0.21"/><ellipse cx="196" cy="640" rx="0.6" ry="0.8" fill-opacity="0.22"/><ellipse cx="143" cy="0" rx="0.7" ry="0.8" fill-opacity="0.29"/><ellipse cx="248" cy="210" rx="1.2" ry="1.5" fill-opacity="0.23"/><ellipse cx="77" cy="510" rx="0.8" ry="1.1" fill-opacity="0.27"/><ellipse cx="501" cy="774" rx="1.2" ry="1.3" fill-opacity="0.40"/><ellipse cx="522" cy="3" rx="2.0" ry="2.1" fill-opacity="0.35" transform="rotate(-6 522 3)"/><ellipse cx="387" cy="762" rx="1.2" ry="1.4" fill-opacity="0.41"/><ellipse cx="409" cy="115" rx="1.3" ry="1.6" fill-opacity="0.22"/><ellipse cx="194" cy="46" rx="1.2" ry="1.6" fill-opacity="0.39"/><ellipse cx="577" cy="108" rx="0.6" ry="0.8" fill-opacity="0.25"/><ellipse cx="545" cy="712" rx="1.0" ry="1.1" fill-opacity="0.25"/><ellipse cx="19" cy="500" rx="0.9" ry="1.0" fill-opacity="0.29"/><ellipse cx="36" cy="433" rx="1.0" ry="1.1" fill-opacity="0.27"/><ellipse cx="529" cy="85" rx="2.2" ry="2.9" fill-opacity="0.30" transform="rotate(-4 529 85)"/><ellipse cx="545" cy="496" rx="1.5" ry="1.9" fill-opacity="0.48" transform="rotate(15 545 496)"/><ellipse cx="470" cy="51" rx="1.4" ry="1.7" fill-opacity="0.49"/><ellipse cx="524" cy="820" rx="1.3" ry="1.4" fill-opacity="0.50"/><ellipse cx="580" cy="208" rx="1.5" ry="1.8" fill-opacity="0.27" transform="rotate(-3 580 208)"/><ellipse cx="12" cy="602" rx="0.9" ry="1.2" fill-opacity="0.31"/><ellipse cx="165" cy="852" rx="2.2" ry="2.9" fill-opacity="0.41" transform="rotate(5 165 852)"/><ellipse cx="17" cy="702" rx="0.9" ry="1.2" fill-opacity="0.43"/><ellipse cx="207" cy="646" rx="1.0" ry="1.4" fill-opacity="0.31"/><ellipse cx="525" cy="82" rx="0.9" ry="1.1" fill-opacity="0.43"/><ellipse cx="581" cy="324" rx="2.0" ry="2.4" fill-opacity="0.26" transform="rotate(-4 581 324)"/><ellipse cx="550" cy="270" rx="1.8" ry="2.3" fill-opacity="0.37" transform="rotate(19 550 270)"/><ellipse cx="569" cy="572" rx="1.8" ry="2.6" fill-opacity="0.35" transform="rotate(22 569 572)"/><ellipse cx="53" cy="46" rx="2.2" ry="3.1" fill-opacity="0.40" transform="rotate(14 53 46)"/><ellipse cx="578" cy="498" rx="1.2" ry="1.7" fill-opacity="0.42"/><ellipse cx="516" cy="630" rx="0.8" ry="0.8" fill-opacity="0.25"/><ellipse cx="556" cy="609" rx="1.2" ry="1.2" fill-opacity="0.44"/><ellipse cx="452" cy="870" rx="1.0" ry="1.2" fill-opacity="0.45"/><ellipse cx="533" cy="711" rx="0.8" ry="1.2" fill-opacity="0.40"/><ellipse cx="468" cy="97" rx="1.3" ry="1.7" fill-opacity="0.42"/><ellipse cx="284" cy="809" rx="1.3" ry="1.7" fill-opacity="0.31"/><ellipse cx="527" cy="322" rx="1.3" ry="1.5" fill-opacity="0.36"/><ellipse cx="545" cy="340" rx="1.0" ry="1.3" fill-opacity="0.25"/><ellipse cx="489" cy="668" rx="1.5" ry="1.7" fill-opacity="0.39" transform="rotate(8 489 668)"/><ellipse cx="167" cy="872" rx="1.3" ry="1.8" fill-opacity="0.46"/><ellipse cx="109" cy="876" rx="1.3" ry="1.6" fill-opacity="0.48"/><ellipse cx="584" cy="273" rx="1.2" ry="1.3" fill-opacity="0.41"/><ellipse cx="420" cy="183" rx="0.6" ry="0.8" fill-opacity="0.36"/><ellipse cx="157" cy="829" rx="1.0" ry="1.2" fill-opacity="0.30"/><ellipse cx="475" cy="167" rx="1.1" ry="1.3" fill-opacity="0.42"/><ellipse cx="222" cy="78" rx="0.7" ry="0.9" fill-opacity="0.26"/><ellipse cx="149" cy="14" rx="1.2" ry="1.5" fill-opacity="0.36"/><ellipse cx="149" cy="166" rx="1.8" ry="2.2" fill-opacity="0.34" transform="rotate(5 149 166)"/><ellipse cx="149" cy="837" rx="0.7" ry="0.9" fill-opacity="0.33"/><ellipse cx="18" cy="166" rx="2.2" ry="3.1" fill-opacity="0.32" transform="rotate(23 18 166)"/><ellipse cx="32" cy="791" rx="0.9" ry="1.1" fill-opacity="0.51"/><ellipse cx="365" cy="33" rx="2.0" ry="2.3" fill-opacity="0.42" transform="rotate(20 365 33)"/><ellipse cx="392" cy="824" rx="1.6" ry="2.3" fill-opacity="0.48" transform="rotate(18 392 824)"/><ellipse cx="428" cy="13" rx="3.0" ry="3.0" fill-opacity="0.47" transform="rotate(4 428 13)"/><ellipse cx="520" cy="197" rx="0.6" ry="0.8" fill-opacity="0.26"/><ellipse cx="48" cy="721" rx="0.8" ry="0.9" fill-opacity="0.37"/><ellipse cx="580" cy="565" rx="2.0" ry="2.8" fill-opacity="0.24" transform="rotate(-4 580 565)"/><ellipse cx="423" cy="790" rx="3.0" ry="3.8" fill-opacity="0.29" transform="rotate(-18 423 790)"/><ellipse cx="53" cy="719" rx="1.4" ry="1.6" fill-opacity="0.39"/><ellipse cx="165" cy="879" rx="1.3" ry="1.7" fill-opacity="0.46"/><ellipse cx="24" cy="418" rx="0.7" ry="0.8" fill-opacity="0.45"/><ellipse cx="55" cy="477" rx="1.1" ry="1.5" fill-opacity="0.23"/><ellipse cx="465" cy="511" rx="2.2" ry="3.1" fill-opacity="0.23" transform="rotate(-1 465 511)"/><ellipse cx="85" cy="812" rx="0.8" ry="1.0" fill-opacity="0.30"/><ellipse cx="269" cy="70" rx="1.0" ry="1.4" fill-opacity="0.32"/><ellipse cx="6" cy="522" rx="1.0" ry="1.2" fill-opacity="0.32"/><ellipse cx="463" cy="590" rx="3.0" ry="3.7" fill-opacity="0.35" transform="rotate(2 463 590)"/><ellipse cx="374" cy="39" rx="0.9" ry="1.2" fill-opacity="0.29"/><ellipse cx="80" cy="9" rx="0.6" ry="0.8" fill-opacity="0.28"/><ellipse cx="187" cy="762" rx="1.3" ry="1.3" fill-opacity="0.24"/><ellipse cx="523" cy="875" rx="0.9" ry="1.1" fill-opacity="0.38"/><ellipse cx="273" cy="688" rx="1.2" ry="1.6" fill-opacity="0.22"/><ellipse cx="485" cy="325" rx="1.4" ry="2.0" fill-opacity="0.36"/><ellipse cx="19" cy="695" rx="1.4" ry="1.8" fill-opacity="0.28"/><ellipse cx="469" cy="683" rx="1.0" ry="1.4" fill-opacity="0.21"/><ellipse cx="520" cy="473" rx="0.8" ry="1.0" fill-opacity="0.22"/><ellipse cx="22" cy="802" rx="1.1" ry="1.2" fill-opacity="0.49"/><ellipse cx="542" cy="213" rx="0.9" ry="1.1" fill-opacity="0.24"/><ellipse cx="566" cy="531" rx="0.8" ry="0.9" fill-opacity="0.31"/><ellipse cx="224" cy="70" rx="2.0" ry="2.5" fill-opacity="0.40" transform="rotate(20 224 70)"/><ellipse cx="582" cy="811" rx="1.1" ry="1.4" fill-opacity="0.45"/><ellipse cx="21" cy="796" rx="1.3" ry="1.5" fill-opacity="0.35"/><ellipse cx="355" cy="106" rx="1.0" ry="1.1" fill-opacity="0.29"/><ellipse cx="452" cy="743" rx="1.4" ry="1.7" fill-opacity="0.43"/><ellipse cx="144" cy="244" rx="1.2" ry="1.2" fill-opacity="0.32"/><ellipse cx="575" cy="300" rx="0.9" ry="1.1" fill-opacity="0.45"/><ellipse cx="577" cy="743" rx="2.2" ry="2.4" fill-opacity="0.26" transform="rotate(23 577 743)"/><ellipse cx="550" cy="53" rx="0.9" ry="1.0" fill-opacity="0.25"/><ellipse cx="579" cy="872" rx="0.8" ry="1.1" fill-opacity="0.50"/><ellipse cx="510" cy="166" rx="0.7" ry="0.8" fill-opacity="0.25"/><ellipse cx="510" cy="867" rx="1.2" ry="1.7" fill-opacity="0.35"/><ellipse cx="178" cy="876" rx="2.2" ry="2.9" fill-opacity="0.36" transform="rotate(-12 178 876)"/><ellipse cx="153" cy="744" rx="0.9" ry="1.0" fill-opacity="0.27"/><ellipse cx="444" cy="126" rx="0.8" ry="0.9" fill-opacity="0.25"/><ellipse cx="482" cy="778" rx="1.4" ry="1.5" fill-opacity="0.29"/><ellipse cx="91" cy="268" rx="1.1" ry="1.2" fill-opacity="0.29"/><ellipse cx="218" cy="130" rx="0.6" ry="0.7" fill-opacity="0.34"/><ellipse cx="163" cy="84" rx="1.5" ry="1.7" fill-opacity="0.41" transform="rotate(24 163 84)"/><ellipse cx="571" cy="837" rx="0.6" ry="0.6" fill-opacity="0.27"/><ellipse cx="546" cy="566" rx="0.7" ry="0.8" fill-opacity="0.32"/><ellipse cx="10" cy="321" rx="1.8" ry="2.4" fill-opacity="0.51" transform="rotate(16 10 321)"/><ellipse cx="30" cy="719" rx="0.8" ry="1.1" fill-opacity="0.44"/><ellipse cx="536" cy="122" rx="0.8" ry="1.1" fill-opacity="0.37"/><ellipse cx="9" cy="857" rx="1.0" ry="1.4" fill-opacity="0.40"/><ellipse cx="82" cy="436" rx="0.8" ry="1.0" fill-opacity="0.26"/><ellipse cx="565" cy="429" rx="0.9" ry="1.1" fill-opacity="0.45"/><ellipse cx="16" cy="731" rx="1.3" ry="1.4" fill-opacity="0.43"/><ellipse cx="436" cy="180" rx="1.3" ry="1.7" fill-opacity="0.36"/><ellipse cx="33" cy="180" rx="2.0" ry="2.7" fill-opacity="0.25" transform="rotate(-19 33 180)"/><ellipse cx="570" cy="622" rx="0.9" ry="0.9" fill-opacity="0.50"/><ellipse cx="120" cy="812" rx="2.0" ry="2.7" fill-opacity="0.48" transform="rotate(17 120 812)"/><ellipse cx="434" cy="739" rx="1.2" ry="1.4" fill-opacity="0.21"/><ellipse cx="355" cy="91" rx="0.8" ry="1.0" fill-opacity="0.38"/><ellipse cx="436" cy="840" rx="1.6" ry="1.9" fill-opacity="0.38" transform="rotate(2 436 840)"/><ellipse cx="464" cy="863" rx="1.8" ry="2.4" fill-opacity="0.28" transform="rotate(17 464 863)"/><ellipse cx="566" cy="481" rx="1.1" ry="1.5" fill-opacity="0.33"/><ellipse cx="45" cy="590" rx="0.8" ry="0.9" fill-opacity="0.48"/><ellipse cx="163" cy="829" rx="1.3" ry="1.6" fill-opacity="0.44"/><ellipse cx="382" cy="120" rx="0.6" ry="0.8" fill-opacity="0.21"/><ellipse cx="558" cy="478" rx="1.8" ry="1.9" fill-opacity="0.40" transform="rotate(-25 558 478)"/><ellipse cx="16" cy="274" rx="1.3" ry="1.4" fill-opacity="0.46"/><ellipse cx="316" cy="186" rx="0.9" ry="1.3" fill-opacity="0.26"/><ellipse cx="4" cy="837" rx="1.2" ry="1.6" fill-opacity="0.43"/><ellipse cx="75" cy="543" rx="1.5" ry="1.5" fill-opacity="0.23" transform="rotate(0 75 543)"/><ellipse cx="382" cy="798" rx="1.4" ry="1.7" fill-opacity="0.30"/><ellipse cx="575" cy="601" rx="1.5" ry="2.0" fill-opacity="0.46" transform="rotate(21 575 601)"/><ellipse cx="533" cy="97" rx="0.7" ry="1.0" fill-opacity="0.33"/><ellipse cx="55" cy="124" rx="1.6" ry="2.1" fill-opacity="0.34" transform="rotate(22 55 124)"/><ellipse cx="38" cy="371" rx="1.2" ry="1.4" fill-opacity="0.39"/><ellipse cx="439" cy="857" rx="2.0" ry="2.7" fill-opacity="0.38" transform="rotate(11 439 857)"/><ellipse cx="34" cy="72" rx="1.1" ry="1.3" fill-opacity="0.40"/><ellipse cx="363" cy="839" rx="1.0" ry="1.4" fill-opacity="0.44"/><ellipse cx="387" cy="33" rx="0.8" ry="0.9" fill-opacity="0.41"/><ellipse cx="461" cy="711" rx="1.1" ry="1.2" fill-opacity="0.32"/><ellipse cx="464" cy="813" rx="1.3" ry="1.9" fill-opacity="0.38"/><ellipse cx="204" cy="541" rx="1.2" ry="1.3" fill-opacity="0.28"/><ellipse cx="503" cy="629" rx="0.8" ry="0.9" fill-opacity="0.33"/><ellipse cx="471" cy="457" rx="1.3" ry="1.6" fill-opacity="0.35"/><ellipse cx="284" cy="213" rx="3.0" ry="3.5" fill-opacity="0.30" transform="rotate(17 284 213)"/><ellipse cx="146" cy="113" rx="1.0" ry="1.1" fill-opacity="0.29"/><ellipse cx="62" cy="453" rx="3.0" ry="4.2" fill-opacity="0.24" transform="rotate(-9 62 453)"/><ellipse cx="210" cy="87" rx="0.7" ry="1.0" fill-opacity="0.23"/><ellipse cx="18" cy="321" rx="2.2" ry="3.1" fill-opacity="0.49" transform="rotate(15 18 321)"/><ellipse cx="540" cy="303" rx="1.2" ry="1.4" fill-opacity="0.29"/><ellipse cx="62" cy="521" rx="1.1" ry="1.4" fill-opacity="0.40"/><ellipse cx="496" cy="130" rx="1.6" ry="1.9" fill-opacity="0.33" transform="rotate(17 496 130)"/><ellipse cx="111" cy="506" rx="0.9" ry="1.1" fill-opacity="0.33"/><ellipse cx="565" cy="359" rx="1.2" ry="1.3" fill-opacity="0.43"/><ellipse cx="534" cy="663" rx="1.8" ry="2.2" fill-opacity="0.28" transform="rotate(-6 534 663)"/><ellipse cx="77" cy="765" rx="2.0" ry="2.9" fill-opacity="0.24" transform="rotate(-13 77 765)"/><ellipse cx="286" cy="105" rx="1.1" ry="1.6" fill-opacity="0.32"/><ellipse cx="11" cy="865" rx="1.8" ry="2.1" fill-opacity="0.35" transform="rotate(12 11 865)"/><ellipse cx="399" cy="837" rx="2.0" ry="2.7" fill-opacity="0.41" transform="rotate(-18 399 837)"/><ellipse cx="341" cy="96" rx="1.1" ry="1.2" fill-opacity="0.34"/><ellipse cx="54" cy="785" rx="1.3" ry="1.3" fill-opacity="0.42"/><ellipse cx="2" cy="690" rx="3.0" ry="4.1" fill-opacity="0.27" transform="rotate(-4 2 690)"/><ellipse cx="117" cy="72" rx="1.6" ry="2.0" fill-opacity="0.27" transform="rotate(-3 117 72)"/><ellipse cx="73" cy="472" rx="1.6" ry="2.1" fill-opacity="0.22" transform="rotate(16 73 472)"/><ellipse cx="97" cy="811" rx="1.1" ry="1.2" fill-opacity="0.39"/><ellipse cx="502" cy="640" rx="0.8" ry="1.0" fill-opacity="0.38"/><ellipse cx="208" cy="12" rx="1.2" ry="1.7" fill-opacity="0.38"/><ellipse cx="148" cy="140" rx="1.0" ry="1.3" fill-opacity="0.34"/><ellipse cx="143" cy="803" rx="1.3" ry="1.5" fill-opacity="0.39"/><ellipse cx="545" cy="512" rx="0.9" ry="1.1" fill-opacity="0.29"/></g><rect x="76" y="0" width="6" height="72" fill="#fbeee2" fill-opacity="0.1"/><rect x="203" y="0" width="4" height="52" fill="#fbeee2" fill-opacity="0.08"/><rect x="262" y="0" width="3" height="40" fill="#fbeee2" fill-opacity="0.06"/><rect x="200" y="770" width="4" height="95" fill="#fbeee2" fill-opacity="0.1"/><rect x="211" y="790" width="3" height="80" fill="#fbeee2" fill-opacity="0.07"/><rect x="317" y="800" width="5" height="83" fill="#fbeee2" fill-opacity="0.2"/><rect x="439" y="775" width="3" height="70" fill="#fbeee2" fill-opacity="0.08"/><rect x="150" y="640" width="3" height="200" fill="#fbeee2" fill-opacity="0.05"/><ellipse cx="29" cy="108" rx="4" ry="7" fill="#b9794a" fill-opacity=".42"/><ellipse cx="116" cy="78" rx="5" ry="6" fill="#b9794a" fill-opacity=".42"/><ellipse cx="338" cy="98" rx="4" ry="5" fill="#b9794a" fill-opacity=".42"/><ellipse cx="420" cy="130" rx="4" ry="4" fill="#b9794a" fill-opacity=".42"/><ellipse cx="520" cy="117" rx="5" ry="5" fill="#b9794a" fill-opacity=".42"/><ellipse cx="576" cy="82" rx="3" ry="6" fill="#b9794a" fill-opacity=".42"/><ellipse cx="40" cy="210" rx="4" ry="5" fill="#b9794a" fill-opacity=".42"/><ellipse cx="63" cy="217" rx="3" ry="4" fill="#b9794a" fill-opacity=".42"/><ellipse cx="120" cy="255" rx="4" ry="5" fill="#b9794a" fill-opacity=".42"/><ellipse cx="255" cy="244" rx="4" ry="4" fill="#b9794a" fill-opacity=".42"/><ellipse cx="565" cy="340" rx="4" ry="6" fill="#b9794a" fill-opacity=".42"/><ellipse cx="540" cy="395" rx="4" ry="6" fill="#b9794a" fill-opacity=".42"/><ellipse cx="25" cy="405" rx="3" ry="4" fill="#b9794a" fill-opacity=".42"/><ellipse cx="562" cy="690" rx="5" ry="8" fill="#b9794a" fill-opacity=".42"/><ellipse cx="546" cy="745" rx="5" ry="7" fill="#b9794a" fill-opacity=".42"/><ellipse cx="508" cy="790" rx="4" ry="6" fill="#b9794a" fill-opacity=".42"/><ellipse cx="40" cy="660" rx="5" ry="6" fill="#b9794a" fill-opacity=".42"/><ellipse cx="50" cy="746" rx="4" ry="6" fill="#b9794a" fill-opacity=".42"/><ellipse cx="180" cy="866" rx="4" ry="8" fill="#b9794a" fill-opacity=".42"/><ellipse cx="150" cy="535" rx="3" ry="4" fill="#b9794a" fill-opacity=".42"/><ellipse cx="455" cy="620" rx="4" ry="5" fill="#b9794a" fill-opacity=".42"/><ellipse cx="474" cy="665" rx="4" ry="5" fill="#b9794a" fill-opacity=".42"/><ellipse cx="455" cy="32" rx="3" ry="5" fill="#b9794a" fill-opacity=".42"/><ellipse cx="315" cy="8" rx="4" ry="6" fill="#b9794a" fill-opacity=".42"/><ellipse cx="505" cy="40" rx="4" ry="5" fill="#b9794a" fill-opacity=".42"/><ellipse cx="22" cy="130" rx="3" ry="8" fill="#b9794a" fill-opacity=".42"/><rect x="19.5" y="20.5" width="546" height="843" fill="none" stroke="#0a0a0a" stroke-width="1"/></svg><div class="abs" style="left:668px;top:120px;width:587px;height:884px;border:1px solid #7a43f5"></div><div class="abs" style="left:665px;top:117px;width:6px;height:6px;background:#fff;border:1px solid #7a43f5"></div><div class="abs" style="left:958px;top:117px;width:6px;height:6px;background:#fff;border:1px solid #7a43f5"></div><div class="abs" style="left:1251px;top:117px;width:6px;height:6px;background:#fff;border:1px solid #7a43f5"></div><div class="abs" style="left:665px;top:558px;width:6px;height:6px;background:#fff;border:1px solid #7a43f5"></div><div class="abs" style="left:1251px;top:558px;width:6px;height:6px;background:#fff;border:1px solid #7a43f5"></div><div class="abs" style="left:665px;top:1000px;width:6px;height:6px;background:#fff;border:1px solid #7a43f5"></div><div class="abs" style="left:958px;top:1000px;width:6px;height:6px;background:#fff;border:1px solid #7a43f5"></div><div class="abs" style="left:1251px;top:1000px;width:6px;height:6px;background:#fff;border:1px solid #7a43f5"></div>
<div id="tabstrip" class="abs"></div>
<div id="hruler" class="abs"><svg width="1823" height="16" style="position:absolute;left:0;top:0;opacity:.999" shape-rendering="crispEdges"><text x="56.0" y="12" font-size="9.5" letter-spacing="-.5" fill="#d2d2d2" font-family="Liberation Sans, sans-serif">60</text><text x="155.0" y="12" font-size="9.5" letter-spacing="-.5" fill="#d2d2d2" font-family="Liberation Sans, sans-serif">50</text><text x="254.0" y="12" font-size="9.5" letter-spacing="-.5" fill="#d2d2d2" font-family="Liberation Sans, sans-serif">40</text><text x="353.0" y="12" font-size="9.5" letter-spacing="-.5" fill="#d2d2d2" font-family="Liberation Sans, sans-serif">30</text><text x="452.0" y="12" font-size="9.5" letter-spacing="-.5" fill="#d2d2d2" font-family="Liberation Sans, sans-serif">20</text><text x="552.0" y="12" font-size="9.5" letter-spacing="-.5" fill="#d2d2d2" font-family="Liberation Sans, sans-serif">10</text><text x="651.0" y="12" font-size="9.5" letter-spacing="-.5" fill="#d2d2d2" font-family="Liberation Sans, sans-serif">0</text><text x="750.0" y="12" font-size="9.5" letter-spacing="-.5" fill="#d2d2d2" font-family="Liberation Sans, sans-serif">10</text><text x="849.0" y="12" font-size="9.5" letter-spacing="-.5" fill="#d2d2d2" font-family="Liberation Sans, sans-serif">20</text><text x="949.0" y="12" font-size="9.5" letter-spacing="-.5" fill="#d2d2d2" font-family="Liberation Sans, sans-serif">30</text><text x="1048.0" y="12" font-size="9.5" letter-spacing="-.5" fill="#d2d2d2" font-family="Liberation Sans, sans-serif">40</text><text x="1147.0" y="12" font-size="9.5" letter-spacing="-.5" fill="#d2d2d2" font-family="Liberation Sans, sans-serif">50</text><text x="1246.0" y="12" font-size="9.5" letter-spacing="-.5" fill="#d2d2d2" font-family="Liberation Sans, sans-serif">60</text><text x="1345.0" y="12" font-size="9.5" letter-spacing="-.5" fill="#d2d2d2" font-family="Liberation Sans, sans-serif">70</text><text x="1445.0" y="12" font-size="9.5" letter-spacing="-.5" fill="#d2d2d2" font-family="Liberation Sans, sans-serif">80</text><text x="1544.0" y="12" font-size="9.5" letter-spacing="-.5" fill="#d2d2d2" font-family="Liberation Sans, sans-serif">90</text><text x="1643.0" y="12" font-size="9.5" letter-spacing="-.5" fill="#d2d2d2" font-family="Liberation Sans, sans-serif">100</text><text x="1742.0" y="12" font-size="9.5" letter-spacing="-.5" fill="#d2d2d2" font-family="Liberation Sans, sans-serif">110</text><path d="M23.5 13V16M33.5 13V16M43.5 13V16M53.5 1V16M63.5 13V16M72.5 13V16M82.5 13V16M92.5 13V16M102.5 9V16M112.5 13V16M122.5 13V16M132.5 13V16M142.5 13V16M152.5 1V16M162.5 13V16M172.5 13V16M182.5 13V16M192.5 13V16M201.5 9V16M211.5 13V16M221.5 13V16M231.5 13V16M241.5 13V16M251.5 1V16M261.5 13V16M271.5 13V16M281.5 13V16M291.5 13V16M301.5 9V16M311.5 13V16M321.5 13V16M330.5 13V16M340.5 13V16M350.5 1V16M360.5 13V16M370.5 13V16M380.5 13V16M390.5 13V16M400.5 9V16M410.5 13V16M420.5 13V16M430.5 13V16M440.5 13V16M449.5 1V16M459.5 13V16M469.5 13V16M479.5 13V16M489.5 13V16M499.5 9V16M509.5 13V16M519.5 13V16M529.5 13V16M539.5 13V16M549.5 1V16M559.5 13V16M569.5 13V16M578.5 13V16M588.5 13V16M598.5 9V16M608.5 13V16M618.5 13V16M628.5 13V16M638.5 13V16M648.5 1V16M658.5 13V16M668.5 13V16M678.5 13V16M688.5 13V16M698.5 9V16M707.5 13V16M717.5 13V16M727.5 13V16M737.5 13V16M747.5 1V16M757.5 13V16M767.5 13V16M777.5 13V16M787.5 13V16M797.5 9V16M807.5 13V16M817.5 13V16M826.5 13V16M836.5 13V16M846.5 1V16M856.5 13V16M866.5 13V16M876.5 13V16M886.5 13V16M896.5 9V16M906.5 13V16M916.5 13V16M926.5 13V16M936.5 13V16M946.5 1V16M955.5 13V16M965.5 13V16M975.5 13V16M985.5 13V16M995.5 9V16M1005.5 13V16M1015.5 13V16M1025.5 13V16M1035.5 13V16M1045.5 1V16M1055.5 13V16M1065.5 13V16M1075.5 13V16M1084.5 13V16M1094.5 9V16M1104.5 13V16M1114.5 13V16M1124.5 13V16M1134.5 13V16M1144.5 1V16M1154.5 13V16M1164.5 13V16M1174.5 13V16M1184.5 13V16M1194.5 9V16M1203.5 13V16M1213.5 13V16M1223.5 13V16M1233.5 13V16M1243.5 1V16M1253.5 13V16M1263.5 13V16M1273.5 13V16M1283.5 13V16M1293.5 9V16M1303.5 13V16M1313.5 13V16M1323.5 13V16M1332.5 13V16M1342.5 1V16M1352.5 13V16M1362.5 13V16M1372.5 13V16M1382.5 13V16M1392.5 9V16M1402.5 13V16M1412.5 13V16M1422.5 13V16M1432.5 13V16M1442.5 1V16M1452.5 13V16M1461.5 13V16M1471.5 13V16M1481.5 13V16M1491.5 9V16M1501.5 13V16M1511.5 13V16M1521.5 13V16M1531.5 13V16M1541.5 3V16M1551.5 13V16M1561.5 13V16M1571.5 13V16M1580.5 13V16M1590.5 9V16M1600.5 13V16M1610.5 13V16M1620.5 13V16M1630.5 13V16M1640.5 3V16M1650.5 13V16M1660.5 13V16M1670.5 13V16M1680.5 13V16M1690.5 9V16M1700.5 13V16M1709.5 13V16M1719.5 13V16M1729.5 13V16M1739.5 3V16M1749.5 13V16M1759.5 13V16M1769.5 13V16M1779.5 13V16M1789.5 9V16M1799.5 13V16M1809.5 13V16M1819.5 13V16" stroke="#808080" stroke-width="1" fill="none"/></svg></div>
<div id="vruler" class="abs"><svg width="17" height="923" style="position:absolute;left:0;top:0;opacity:.999" shape-rendering="crispEdges"><text x="3.5" y="34.0" font-size="9.5" fill="#d2d2d2" font-family="Liberation Sans, sans-serif">0</text><text x="3.5" y="123.0" font-size="9.5" fill="#d2d2d2" font-family="Liberation Sans, sans-serif">1</text><text x="3.5" y="133.0" font-size="9.5" fill="#d2d2d2" font-family="Liberation Sans, sans-serif">0</text><text x="3.5" y="222.0" font-size="9.5" fill="#d2d2d2" font-family="Liberation Sans, sans-serif">2</text><text x="3.5" y="232.0" font-size="9.5" fill="#d2d2d2" font-family="Liberation Sans, sans-serif">0</text><text x="3.5" y="321.0" font-size="9.5" fill="#d2d2d2" font-family="Liberation Sans, sans-serif">3</text><text x="3.5" y="331.0" font-size="9.5" fill="#d2d2d2" font-family="Liberation Sans, sans-serif">0</text><text x="3.5" y="421.0" font-size="9.5" fill="#d2d2d2" font-family="Liberation Sans, sans-serif">4</text><text x="3.5" y="431.0" font-size="9.5" fill="#d2d2d2" font-family="Liberation Sans, sans-serif">0</text><text x="3.5" y="520.0" font-size="9.5" fill="#d2d2d2" font-family="Liberation Sans, sans-serif">5</text><text x="3.5" y="530.0" font-size="9.5" fill="#d2d2d2" font-family="Liberation Sans, sans-serif">0</text><text x="3.5" y="619.0" font-size="9.5" fill="#d2d2d2" font-family="Liberation Sans, sans-serif">6</text><text x="3.5" y="629.0" font-size="9.5" fill="#d2d2d2" font-family="Liberation Sans, sans-serif">0</text><text x="3.5" y="718.0" font-size="9.5" fill="#d2d2d2" font-family="Liberation Sans, sans-serif">7</text><text x="3.5" y="728.0" font-size="9.5" fill="#d2d2d2" font-family="Liberation Sans, sans-serif">0</text><text x="3.5" y="817.0" font-size="9.5" fill="#d2d2d2" font-family="Liberation Sans, sans-serif">8</text><text x="3.5" y="827.0" font-size="9.5" fill="#d2d2d2" font-family="Liberation Sans, sans-serif">0</text><path d="M14 9.5H17M14 19.5H17M14 29.5H17M2 39.5H17M14 49.5H17M14 59.5H17M14 69.5H17M14 78.5H17M10 88.5H17M14 98.5H17M14 108.5H17M14 118.5H17M14 128.5H17M2 138.5H17M14 148.5H17M14 158.5H17M14 168.5H17M14 178.5H17M10 188.5H17M14 198.5H17M14 207.5H17M14 217.5H17M14 227.5H17M2 237.5H17M14 247.5H17M14 257.5H17M14 267.5H17M14 277.5H17M10 287.5H17M14 297.5H17M14 307.5H17M14 317.5H17M14 327.5H17M2 336.5H17M14 346.5H17M14 356.5H17M14 366.5H17M14 376.5H17M10 386.5H17M14 396.5H17M14 406.5H17M14 416.5H17M14 426.5H17M2 436.5H17M14 446.5H17M14 455.5H17M14 465.5H17M14 475.5H17M10 485.5H17M14 495.5H17M14 505.5H17M14 515.5H17M14 525.5H17M2 535.5H17M14 545.5H17M14 555.5H17M14 565.5H17M14 575.5H17M10 584.5H17M14 594.5H17M14 604.5H17M14 614.5H17M14 624.5H17M2 634.5H17M14 644.5H17M14 654.5H17M14 664.5H17M14 674.5H17M10 684.5H17M14 694.5H17M14 704.5H17M14 713.5H17M14 723.5H17M2 733.5H17M14 743.5H17M14 753.5H17M14 763.5H17M14 773.5H17M10 783.5H17M14 793.5H17M14 803.5H17M14 813.5H17M14 823.5H17M2 832.5H17M14 842.5H17M14 852.5H17M14 862.5H17M14 872.5H17M10 882.5H17M14 892.5H17M14 902.5H17M14 912.5H17M14 922.5H17" stroke="#808080" stroke-width="1" fill="none"/></svg></div>
<div class="abs" style="left:40px;top:84px;width:17px;height:16px;background:#2a2a2a"></div>
<div id="vscroll" class="abs"><div class="abs" style="left:3px;top:7px;border-left:5px solid transparent;border-right:5px solid transparent;border-bottom:6px solid #f0f0f0"></div><div class="abs" style="left:3px;top:927px;border-left:5px solid transparent;border-right:5px solid transparent;border-top:6px solid #f0f0f0"></div><div class="abs" style="left:0px;top:463px;width:15px;height:15px;background:#9a9a9a"></div></div>
<div id="status" class="abs"><svg class="abs" style="left:9px;top:1px" width="28" height="14" viewBox="0 0 28 14"><rect x=".5" y=".5" width="27" height="13" rx="2" fill="#525252" stroke="#3c3c3c"/><circle cx="8" cy="7" r="3" fill="none" stroke="#6e6e6e" stroke-width="2.400" stroke-dasharray="1.600 1"/><path d="M15 6a4 3 0 0 1 8 0M23 8l-1.500-3 3 0z M15 8a4 3 0 0 0 6 1" fill="none" stroke="#6e6e6e" stroke-width="1.300"/></svg><svg class="abs" style="left:39px;top:1px" width="16" height="14" viewBox="0 0 16 14"><path d="M7 3.500H1.500V12.500H11.500V9" fill="none" stroke="#d0d0d0" stroke-width="1.500"/><path d="M5 9.500C5 5.500 8 4 10.500 4V1.500L15 5.500L10.500 9.500V7C8.500 7 6.500 7.500 5 9.500Z" fill="#d0d0d0"/></svg><div class="abs" style="left:63px;top:1px;width:42px;height:15px;background:#a4a4a4;border:1px solid #2c2c2c;color:#111;font-size:10px;line-height:16px;padding-left:2px;letter-spacing:-0.395px">350%</div><div class="abs" style="left:105px;top:1px;width:16px;height:15px;border:1px solid #2c2c2c;background:linear-gradient(#575757,#4b4b4b)"><div class="abs" style="left:3px;top:5px;border-left:4px solid transparent;border-right:4px solid transparent;border-top:5px solid #e0e0e0"></div></div><svg class="abs" style="left:129px;top:3px" width="30" height="10" viewBox="0 0 30 10" fill="#7a7a7a"><rect x="1" y="1" width="1.500" height="8"/><path d="M8 1v8l-5-4z"/><path d="M24 1v8l-5-4z"/></svg><div class="abs" style="left:163px;top:1px;width:43px;height:15px;background:#a4a4a4;border:1px solid #2c2c2c;color:#111;font-size:10px;line-height:16px;padding-left:2px">1</div><div class="abs" style="left:206px;top:1px;width:16px;height:15px;border:1px solid #2c2c2c;background:linear-gradient(#575757,#4b4b4b)"><div class="abs" style="left:3px;top:5px;border-left:4px solid transparent;border-right:4px solid transparent;border-top:5px solid #e0e0e0"></div></div><svg class="abs" style="left:229px;top:3px" width="30" height="10" viewBox="0 0 30 10" fill="#7a7a7a"><path d="M2 1v8l5-4z"/><path d="M16 1v8l5-4z"/><rect x="21.500" y="1" width="1.500" height="8"/></svg><div class="abs" style="left:262px;top:1px;width:2px;height:15px;border-left:1px solid #363636;border-right:1px solid #585858"></div><div class="t" style="left:343px;top:4px;font-size:10px;color:#dcdcdc;letter-spacing:-0.016px">Auswahl</div><div class="abs" style="left:461px;top:1px;width:2px;height:15px;border-left:1px solid #363636;border-right:1px solid #585858"></div><div class="abs" style="left:470px;top:3px;border-top:5px solid transparent;border-bottom:5px solid transparent;border-left:6px solid #e0e0e0"></div><div class="abs" style="left:481px;top:0;width:1342px;height:16px;background:#373737;border-left:1px solid #2c2c2c"></div><div class="abs" style="left:487px;top:3px;border-top:5px solid transparent;border-bottom:5px solid transparent;border-right:6px solid #f0f0f0"></div><div class="abs" style="left:1810px;top:3px;border-top:5px solid transparent;border-bottom:5px solid transparent;border-left:6px solid #f0f0f0"></div><div class="abs" style="left:1144px;top:1px;width:15px;height:14px;background:#9a9a9a"></div><div class="abs" style="left:1823px;top:0;width:18px;height:16px;background:#484848"></div></div>
<div class="abs" style="left:1553px;top:86px;width:303px;height:388px;background:#4a4a4a;border:1px solid #2a2a2a;box-shadow:1px 1px 2px rgba(0,0,0,.35)"><div class="abs" style="left:0;top:0;width:301px;height:12px;background:#2f2f2f;border-radius:2px 2px 0 0"></div><svg class="abs" style="left:273px;top:3px" width="26" height="7" viewBox="0 0 26 7"><path d="M4 0v7L0 3.500zM8.500 0v7L4.500 3.500z" fill="#d8d8d8"/><path d="M18.500 .5l5 5M23.500 .5l-5 5" stroke="#e8e8e8" stroke-width="1.900"/></svg><div class="abs" style="left:0;top:12px;width:301px;height:18px;background:#363636;border-bottom:1px solid #2c2c2c"></div><div class="abs" style="left:0;top:12px;width:47px;height:19px;background:#4a4a4a;border-right:1px solid #2c2c2c"></div><div class="t" style="left:7px;top:17px;font-size:10px;font-weight:bold;color:#e6e6e6;letter-spacing:-0.604px">Ebenen</div><svg class="abs" style="left:283px;top:16px" width="16" height="10" viewBox="0 0 16 10"><path d="M0 3h5.500l-2.750 3z" fill="#d8d8d8"/><path d="M6.500 1.500h8.500M6.500 3.500h8.500M6.500 5.500h8.500M6.500 7.500h8.500" stroke="#d8d8d8" stroke-width="1"/></svg><div class="abs" style="left:5px;top:35px;width:291px;height:324px;border:1px solid #2e2e2e;background:#4a4a4a"></div><div class="abs" style="left:6px;top:36px;width:289px;height:21px;background:#4a4a4a;border-bottom:1px solid #353535"></div><div class="abs" style="left:26px;top:36px;width:1px;height:20px;background:#393939"></div><div class="abs" style="left:47px;top:36px;width:1px;height:20px;background:#393939"></div><div class="abs" style="left:53px;top:36px;width:1px;height:20px;background:#393939"></div><div class="abs" style="left:260px;top:36px;width:1px;height:20px;background:#393939"></div><div class="abs" style="left:49px;top:37px;width:3px;height:18px;background:#1f8a42"></div><svg class="abs" style="left:32px;top:40px" width="10" height="11" viewBox="0 0 10 11"><path d="M2.500 5V3.500a2.500 2.500 0 0 1 5 0V5" fill="none" stroke="#a8a8a8" stroke-width="1.500"/><rect x="1" y="4.800" width="8" height="6" rx=".8" fill="#a8a8a8"/><rect x="4.200" y="6.500" width="1.600" height="2.500" fill="#4a4a4a"/></svg><div class="abs" style="left:59px;top:42px;border-top:4px solid transparent;border-bottom:4px solid transparent;border-left:6px solid #e0e0e0"></div><svg class="abs" style="left:75px;top:37px" width="18" height="18" viewBox="0 0 18 18"><rect x=".5" y=".5" width="17" height="17" fill="#fff" stroke="#0c0c0c"/><rect x="3" y="1.500" width="12" height="15" fill="#ecd3a8"/><path d="M9 3.500l3.500 8h-7z" fill="#cf4d3c"/><rect x="5" y="12.300" width="8" height="1.800" fill="#cf4d3c"/><rect x="3" y="1.500" width="12" height="15" fill="none" stroke="#d9b07c" stroke-width=".8"/></svg><div class="t" style="left:98px;top:42px;font-size:10px;color:#e8e8e8;letter-spacing:-0.054px">Vorderseite</div><svg class="abs" style="left:263.5px;top:39.5px" width="14" height="14" viewBox="0 0 14 14"><circle cx="7" cy="7" r="4.200" fill="none" stroke="#c8c8c8" stroke-width="1.100"/></svg><div class="abs" style="left:6px;top:57px;width:289px;height:21px;background:#5c6675;border-bottom:1px solid #353535"></div><div class="abs" style="left:26px;top:57px;width:1px;height:20px;background:#393939"></div><div class="abs" style="left:47px;top:57px;width:1px;height:20px;background:#393939"></div><div class="abs" style="left:53px;top:57px;width:1px;height:20px;background:#393939"></div><div class="abs" style="left:260px;top:57px;width:1px;height:20px;background:#393939"></div><div class="abs" style="left:49px;top:58px;width:3px;height:18px;background:#4f4fff"></div><svg class="abs" style="left:9px;top:62px" width="13" height="10" viewBox="0 0 13 10"><path d="M.3 4.800C3 .700 10 .700 12.700 4.800 10 8.900 3 8.900 .3 4.800z" fill="#bebebe"/><circle cx="6.300" cy="4.700" r="3" fill="#333"/><circle cx="7.500" cy="3.600" r="1.100" fill="#f4f4f4"/></svg><div class="abs" style="left:58px;top:65px;border-left:4px solid transparent;border-right:4px solid transparent;border-top:6px solid #e0e0e0"></div><svg class="abs" style="left:75px;top:58px" width="18" height="18" viewBox="0 0 18 18"><rect x=".5" y=".5" width="17" height="17" fill="#fff" stroke="#0c0c0c"/><rect x="4.500" y="3" width="9" height="14" fill="#f0d3bd" stroke="#d9ae8a" stroke-width=".8"/></svg><div class="t" style="left:98px;top:63px;font-size:10px;color:#e8e8e8;letter-spacing:-0.167px">Rückseite</div><svg class="abs" style="left:263.5px;top:60.5px" width="14" height="14" viewBox="0 0 14 14"><circle cx="7" cy="7" r="4.200" fill="none" stroke="#c8c8c8" stroke-width="1.100"/></svg><div class="abs" style="left:281px;top:65px;width:7px;height:7px;background:#4f4fff;border:1px solid #111"></div><div class="abs" style="left:289px;top:57px;border-left:6px solid transparent;border-top:6px solid #d8d8d8"></div><div class="abs" style="left:6px;top:78px;width:289px;height:21px;background:#595959;border-bottom:1px solid #353535"></div><div class="abs" style="left:26px;top:78px;width:1px;height:20px;background:#393939"></div><div class="abs" style="left:47px;top:78px;width:1px;height:20px;background:#393939"></div><div class="abs" style="left:53px;top:78px;width:1px;height:20px;background:#393939"></div><div class="abs" style="left:260px;top:78px;width:1px;height:20px;background:#393939"></div><div class="abs" style="left:49px;top:79px;width:3px;height:18px;background:#4f4fff"></div><svg class="abs" style="left:9px;top:83px" width="13" height="10" viewBox="0 0 13 10"><path d="M.3 4.800C3 .700 10 .700 12.700 4.800 10 8.900 3 8.900 .3 4.800z" fill="#bebebe"/><circle cx="6.300" cy="4.700" r="3" fill="#333"/><circle cx="7.500" cy="3.600" r="1.100" fill="#f4f4f4"/></svg><svg class="abs" style="left:95px;top:79px" width="18" height="18" viewBox="0 0 18 18"><rect x=".5" y=".5" width="17" height="17" fill="#fff" stroke="#0c0c0c"/><rect x="2" y="1.500" width="14" height="15.500" fill="#f6ecdc"/><rect x="2" y="1.500" width="14" height="15.500" fill="none" stroke="#e2cba8" stroke-width="1.200"/></svg><div class="t" style="left:118px;top:84px;font-size:10px;color:#e8e8e8;letter-spacing:0.178px">Textur</div><svg class="abs" style="left:263.5px;top:81.5px" width="14" height="14" viewBox="0 0 14 14"><circle cx="7" cy="7" r="6" fill="none" stroke="#c8c8c8" stroke-width="1"/><circle cx="7" cy="7" r="4.200" fill="#a4a4a4" stroke="#d8d8d8" stroke-width="1"/></svg><div class="abs" style="left:281px;top:84px;width:9px;height:9px;background:#4f4fff;border:1px solid #111"></div><div class="abs" style="left:6px;top:99px;width:289px;height:21px;background:#4a4a4a;border-bottom:1px solid #353535"></div><div class="abs" style="left:26px;top:99px;width:1px;height:20px;background:#393939"></div><div class="abs" style="left:47px;top:99px;width:1px;height:20px;background:#393939"></div><div class="abs" style="left:53px;top:99px;width:1px;height:20px;background:#393939"></div><div class="abs" style="left:260px;top:99px;width:1px;height:20px;background:#393939"></div><div class="abs" style="left:49px;top:100px;width:3px;height:18px;background:#4f4fff"></div><svg class="abs" style="left:9px;top:104px" width="13" height="10" viewBox="0 0 13 10"><path d="M.3 4.800C3 .700 10 .700 12.700 4.800 10 8.900 3 8.900 .3 4.800z" fill="#bebebe"/><circle cx="6.300" cy="4.700" r="3" fill="#333"/><circle cx="7.500" cy="3.600" r="1.100" fill="#f4f4f4"/></svg><svg class="abs" style="left:95px;top:100px" width="18" height="18" viewBox="0 0 18 18"><rect x=".5" y=".5" width="17" height="17" fill="#fff" stroke="#0c0c0c"/><rect x="5" y="3.500" width="8" height="11.500" fill="#e9a6ae"/></svg><div class="t" style="left:118px;top:105px;font-size:10px;color:#e8e8e8;letter-spacing:-0.285px">Rotes Rechteck</div><svg class="abs" style="left:263.5px;top:102.5px" width="14" height="14" viewBox="0 0 14 14"><circle cx="7" cy="7" r="4.200" fill="#9a9a9a" stroke="#c8c8c8" stroke-width="1"/></svg><div class="abs" style="left:6px;top:120px;width:289px;height:21px;background:#4a4a4a;border-bottom:1px solid #353535"></div><div class="abs" style="left:26px;top:120px;width:1px;height:20px;background:#393939"></div><div class="abs" style="left:47px;top:120px;width:1px;height:20px;background:#393939"></div><div class="abs" style="left:53px;top:120px;width:1px;height:20px;background:#393939"></div><div class="abs" style="left:260px;top:120px;width:1px;height:20px;background:#393939"></div><div class="abs" style="left:49px;top:121px;width:3px;height:18px;background:#4f4fff"></div><svg class="abs" style="left:9px;top:125px" width="13" height="10" viewBox="0 0 13 10"><path d="M.3 4.800C3 .700 10 .700 12.700 4.800 10 8.900 3 8.900 .3 4.800z" fill="#bebebe"/><circle cx="6.300" cy="4.700" r="3" fill="#333"/><circle cx="7.500" cy="3.600" r="1.100" fill="#f4f4f4"/></svg><svg class="abs" style="left:95px;top:121px" width="18" height="18" viewBox="0 0 18 18"><rect x=".5" y=".5" width="17" height="17" fill="#fff" stroke="#0c0c0c"/></svg><div class="t" style="left:118px;top:126px;font-size:10px;color:#e8e8e8;letter-spacing:-0.232px">Weißes Rechteck</div><svg class="abs" style="left:263.5px;top:123.5px" width="14" height="14" viewBox="0 0 14 14"><circle cx="7" cy="7" r="4.200" fill="none" stroke="#c8c8c8" stroke-width="1.100"/></svg><div class="abs" style="left:6px;top:141px;width:289px;height:21px;background:#4a4a4a;border-bottom:1px solid #353535"></div><div class="abs" style="left:26px;top:141px;width:1px;height:20px;background:#393939"></div><div class="abs" style="left:47px;top:141px;width:1px;height:20px;background:#393939"></div><div class="abs" style="left:53px;top:141px;width:1px;height:20px;background:#393939"></div><div class="abs" style="left:260px;top:141px;width:1px;height:20px;background:#393939"></div><div class="abs" style="left:49px;top:142px;width:3px;height:18px;background:#ff5a14"></div><svg class="abs" style="left:32px;top:145px" width="10" height="11" viewBox="0 0 10 11"><path d="M2.500 5V3.500a2.500 2.500 0 0 1 5 0V5" fill="none" stroke="#a8a8a8" stroke-width="1.500"/><rect x="1" y="4.800" width="8" height="6" rx=".8" fill="#a8a8a8"/><rect x="4.200" y="6.500" width="1.600" height="2.500" fill="#4a4a4a"/></svg><div class="abs" style="left:59px;top:147px;border-top:4px solid transparent;border-bottom:4px solid transparent;border-left:6px solid #e0e0e0"></div><svg class="abs" style="left:75px;top:142px" width="18" height="18" viewBox="0 0 18 18"><rect x=".5" y=".5" width="17" height="17" fill="#fff" stroke="#0c0c0c"/><rect x="3.500" y="2" width="11" height="14.500" fill="#fafafa" stroke="#e0a58a" stroke-width=".6"/><circle cx="9" cy="7.500" r="1.300" fill="#999"/><circle cx="12.500" cy="8" r="1" fill="#777"/><path d="M8 15.500h3" stroke="#444" stroke-width="1"/><path d="M3.500 2v14.500" stroke="#e8743c" stroke-width=".8"/></svg><div class="t" style="left:98px;top:147px;font-size:10px;color:#e8e8e8;letter-spacing:-0.078px">Vorlage Vorderseite</div><svg class="abs" style="left:263.5px;top:144.5px" width="14" height="14" viewBox="0 0 14 14"><circle cx="7" cy="7" r="4.200" fill="none" stroke="#c8c8c8" stroke-width="1.100"/></svg><div class="abs" style="left:6px;top:162px;width:289px;height:21px;background:#4a4a4a;border-bottom:1px solid #353535"></div><div class="abs" style="left:26px;top:162px;width:1px;height:20px;background:#393939"></div><div class="abs" style="left:47px;top:162px;width:1px;height:20px;background:#393939"></div><div class="abs" style="left:53px;top:162px;width:1px;height:20px;background:#393939"></div><div class="abs" style="left:260px;top:162px;width:1px;height:20px;background:#393939"></div><div class="abs" style="left:49px;top:163px;width:3px;height:18px;background:#ff5a14"></div><svg class="abs" style="left:9px;top:167px" width="13" height="10" viewBox="0 0 13 10"><path d="M.3 4.800C3 .700 10 .700 12.700 4.800 10 8.900 3 8.900 .3 4.800z" fill="#bebebe"/><circle cx="6.300" cy="4.700" r="3" fill="#333"/><circle cx="7.500" cy="3.600" r="1.100" fill="#f4f4f4"/></svg><svg class="abs" style="left:32px;top:166px" width="10" height="11" viewBox="0 0 10 11"><path d="M2.500 5V3.500a2.500 2.500 0 0 1 5 0V5" fill="none" stroke="#a8a8a8" stroke-width="1.500"/><rect x="1" y="4.800" width="8" height="6" rx=".8" fill="#a8a8a8"/><rect x="4.200" y="6.500" width="1.600" height="2.500" fill="#4a4a4a"/></svg><div class="abs" style="left:59px;top:168px;border-top:4px solid transparent;border-bottom:4px solid transparent;border-left:6px solid #e0e0e0"></div><svg class="abs" style="left:75px;top:163px" width="18" height="18" viewBox="0 0 18 18"><rect x=".5" y=".5" width="17" height="17" fill="#fff" stroke="#0c0c0c"/><rect x="3.500" y="2" width="11" height="14.500" fill="#fafafa" stroke="#e0a58a" stroke-width=".6"/><circle cx="9" cy="7.500" r="1.300" fill="#999"/><circle cx="12.500" cy="8" r="1" fill="#777"/><path d="M8 15.500h3" stroke="#444" stroke-width="1"/><path d="M3.500 2v14.500" stroke="#e8743c" stroke-width=".8"/></svg><div class="t" style="left:98px;top:168px;font-size:10px;color:#e8e8e8;letter-spacing:-0.171px">Vorlage Rückseite</div><svg class="abs" style="left:263.5px;top:165.5px" width="14" height="14" viewBox="0 0 14 14"><circle cx="7" cy="7" r="4.200" fill="none" stroke="#c8c8c8" stroke-width="1.100"/></svg><div class="t" style="left:5px;top:363px;font-size:10px;color:#e6e6e6;letter-spacing:-0.179px">4 Ebenen</div><svg class="abs" style="left:156px;top:361px" width="130" height="16" viewBox="0 0 130 16"><circle cx="9.500" cy="5.500" r="3.500" fill="none" stroke="#d0d0d0" stroke-width="1.200"/><path d="M7 8.500L2.500 13" stroke="#d0d0d0" stroke-width="1.400"/><rect x="28.500" y="3.500" width="7" height="7" fill="#5e5e5e" stroke="#6e6e6e"/><rect x="32.500" y="6.500" width="7" height="7" fill="none" stroke="#6e6e6e"/><path d="M58 5h7v7h-4l-3-3z" fill="#d0d0d0"/><path d="M53.500 3.500v3h4M56 5l1.700 1.500L56 8" fill="none" stroke="#d0d0d0" stroke-width="1.200"/><path d="M81 4.500h9v9h-5l-4-4z" fill="#d0d0d0"/><path d="M81 9.500l4 4v-4z" fill="#8a8a8a"/><path d="M106.500 6.500h8l-.7 7h-6.600z" fill="none" stroke="#d0d0d0" stroke-width="1.200"/><path d="M105.500 5h10M109 5l.5-1.500h2l.5 1.500M108.500 8v4.500M110.500 8v4.500M112.500 8v4.500" fill="none" stroke="#d0d0d0" stroke-width="1"/></svg><svg class="abs" style="left:290px;top:366px" width="10" height="10" viewBox="0 0 10 10" fill="#222"><rect x="8" y="0" width="1" height="1"/><rect x="6" y="2" width="1" height="1"/><rect x="8" y="2" width="1" height="1"/><rect x="4" y="4" width="1" height="1"/><rect x="6" y="4" width="1" height="1"/><rect x="8" y="4" width="1" height="1"/><rect x="2" y="6" width="1" height="1"/><rect x="4" y="6" width="1" height="1"/><rect x="6" y="6" width="1" height="1"/><rect x="8" y="6" width="1" height="1"/><rect x="0" y="8" width="1" height="1"/><rect x="2" y="8" width="1" height="1"/><rect x="4" y="8" width="1" height="1"/><rect x="6" y="8" width="1" height="1"/><rect x="8" y="8" width="1" height="1"/></svg><div class="abs" style="left:0;top:378px;width:301px;height:8px;border-top:1px solid #2c2c2c;background:#484848"></div><div class="abs" style="left:141px;top:381px;width:20px;height:4px;background:repeating-linear-gradient(90deg,#1c1c1c 0 1px,transparent 1px 2px)"></div></div>
<div class="abs" style="left:1879px;top:65px;width:2px;height:975px;background:#2b2b2b"></div><div id="dock" class="abs"><div class="abs" style="left:0;top:0;width:38px;height:11px;background:#333;border-bottom:1px solid #2a2a2a"></div><svg class="abs" style="left:26px;top:3px" width="8" height="6" viewBox="0 0 9 7" fill="#d4d4d4"><path d="M4 0v7L0 3.500zM8.500 0v7L4.500 3.500z"/></svg><div class="abs" style="left:0;top:12px;width:38px;height:124px;border-top:1px solid #5e5e5e;border-bottom:1px solid #2e2e2e"></div><div class="abs" style="left:10px;top:15px;width:20px;height:4px;background:repeating-linear-gradient(90deg,#1c1c1c 0 1px,transparent 1px 2px)"></div><div class="abs" style="left:0;top:136px;width:38px;height:69px;border-top:1px solid #5e5e5e;border-bottom:1px solid #2e2e2e"></div><div class="abs" style="left:10px;top:139px;width:20px;height:4px;background:repeating-linear-gradient(90deg,#1c1c1c 0 1px,transparent 1px 2px)"></div><div class="abs" style="left:0;top:205px;width:38px;height:98px;border-top:1px solid #5e5e5e;border-bottom:1px solid #2e2e2e"></div><div class="abs" style="left:10px;top:208px;width:20px;height:4px;background:repeating-linear-gradient(90deg,#1c1c1c 0 1px,transparent 1px 2px)"></div><div class="abs" style="left:0;top:303px;width:38px;height:96px;border-top:1px solid #5e5e5e;border-bottom:1px solid #2e2e2e"></div><div class="abs" style="left:10px;top:306px;width:20px;height:4px;background:repeating-linear-gradient(90deg,#1c1c1c 0 1px,transparent 1px 2px)"></div><div class="abs" style="left:0;top:399px;width:38px;height:70px;border-top:1px solid #5e5e5e;border-bottom:1px solid #2e2e2e"></div><div class="abs" style="left:10px;top:402px;width:20px;height:4px;background:repeating-linear-gradient(90deg,#1c1c1c 0 1px,transparent 1px 2px)"></div><div class="abs" style="left:0;top:469px;width:38px;height:41px;border-top:1px solid #5e5e5e;border-bottom:1px solid #2e2e2e"></div><div class="abs" style="left:10px;top:472px;width:20px;height:4px;background:repeating-linear-gradient(90deg,#1c1c1c 0 1px,transparent 1px 2px)"></div><div class="abs" style="left:0;top:510px;width:38px;height:97px;border-top:1px solid #5e5e5e;border-bottom:1px solid #2e2e2e"></div><div class="abs" style="left:10px;top:513px;width:20px;height:4px;background:repeating-linear-gradient(90deg,#1c1c1c 0 1px,transparent 1px 2px)"></div><svg class="abs" style="left:0;top:0" width="38" height="975" viewBox="1882 65 38 975" fill="#d4d4d4"><rect x="1893.500" y="95.500" width="16" height="10" fill="#e0e0e0" stroke="#d4d4d4" stroke-width="1"/><rect x="1894.500" y="96.500" width="4" height="3.500" fill="#2e2e2e"/><rect x="1899.500" y="96.500" width="4" height="3.500" fill="#565656"/><rect x="1904.500" y="96.500" width="4" height="3.500" fill="#9c9c9c"/><rect x="1894.500" y="101" width="4" height="3.500" fill="#8c8c8c"/><rect x="1899.500" y="101" width="4" height="3.500" fill="#787878"/><rect x="1904.500" y="101" width="4" height="3.500" fill="#4c4c4c"/><path d="M1892 130c0-4.500 4-8 9.500-8s9 3 9 6.500-3 4-4.500 3.500-2.500.5-2 2 0 2.500-3 2.500c-5 0-9-2.500-9-6.500z"/><circle cx="1897" cy="127" r="1.400" fill="#484848"/><circle cx="1901.500" cy="125" r="1.400" fill="#484848"/><circle cx="1906" cy="126.500" r="1.400" fill="#484848"/><circle cx="1896.500" cy="131.500" r="1.400" fill="#484848"/><defs><linearGradient id="dg1" x1="0" y1="0" x2="1" y2="1"><stop offset="0" stop-color="#eee"/><stop offset="1" stop-color="#555"/></linearGradient></defs><path d="M1893.500 148.500c8 0 16 7 16.500 16.500h-16.500z" fill="url(#dg1)" stroke="#d4d4d4" stroke-width="1.200"/><circle cx="1899" cy="186" r="5.500" fill="none" stroke="#d4d4d4" stroke-width="1.800"/><circle cx="1899" cy="186" r="2" /><path d="M1902 183l6-5M1902 189l6 4" stroke="#d4d4d4" stroke-width="1.600"/><circle cx="1908.500" cy="177.500" r="2.300"/><circle cx="1908.500" cy="193.500" r="2.300"/><rect x="1896.500" y="226" width="8" height="8"/><path d="M1898 226l-3-8M1900.500 226v-9M1903 226l4-6" stroke="#d4d4d4" stroke-width="1.600"/><path d="M1893.500 216l2.500-1 1 3.500-2 .5zM1905 220l3-3.500 2 2.500z"/><circle cx="1901" cy="249" r="3.600"/><circle cx="1896.500" cy="255" r="3.600"/><circle cx="1905.500" cy="255" r="3.600"/><path d="M1900 253h2l1.500 8h-5z"/><path d="M1893 288.500h17" stroke="#d4d4d4" stroke-width="1"/><path d="M1893 293h17" stroke="#d4d4d4" stroke-width="2"/><path d="M1893 299h17" stroke="#d4d4d4" stroke-width="3"/><defs><linearGradient id="dg2" x1="0" x2="1"><stop offset="0" stop-color="#3a3a3a"/><stop offset="1" stop-color="#ddd"/></linearGradient></defs><rect x="1893.500" y="316.500" width="16" height="11" fill="url(#dg2)" stroke="#d4d4d4" stroke-width="1.200"/><circle cx="1898" cy="348" r="5.500" fill="#bdbdbd"/><circle cx="1903" cy="353" r="5" fill="#6e6e6e" fill-opacity=".7" stroke="#d4d4d4" stroke-width="1.600"/><circle cx="1901" cy="391.500" r="5.500" fill="#c4c4c4"/><circle cx="1901" cy="391.500" r="8" fill="none" stroke="#d4d4d4" stroke-width="1.100" stroke-dasharray="2.200 1.600"/><rect x="1896.500" y="412.500" width="13" height="13" fill="none" stroke="#d4d4d4" stroke-width="1.200"/><rect x="1893.500" y="420.500" width="5" height="5" fill="#484848" stroke="#d4d4d4" stroke-width="1.100"/><rect x="1896.500" y="423.500" width="5" height="5" fill="#9a9a9a" stroke="#d4d4d4" stroke-width="1.100"/><rect x="1894" y="441" width="9" height="9" fill="#bdbdbd"/><rect x="1899.500" y="446.500" width="9" height="9" fill="#cfcfcf" stroke="#484848" stroke-width="1"/><rect x="1899.500" y="446.500" width="4" height="4" fill="#8a8a8a" stroke="#484848" stroke-width="1"/><rect x="1895.500" y="482.500" width="11" height="11" fill="none" stroke="#d4d4d4" stroke-width="1.200" stroke-dasharray="2 1.500"/><rect x="1894" y="481" width="3" height="3"/><rect x="1905" y="481" width="3" height="3"/><rect x="1894" y="492" width="3" height="3"/><rect x="1905" y="492" width="3" height="3"/><rect x="1900" y="487" width="2" height="2"/><path d="M1894.500 509v14" stroke="#d4d4d4" stroke-width="1.200"/><rect x="1896.500" y="511" width="7" height="4.500"/><rect x="1896.500" y="517.500" width="11" height="4.500" fill="#a8a8a8"/><circle cx="1901" cy="557.500" r="6.500" fill="#c8c8c8"/><circle cx="1901" cy="557.500" r="8" fill="none" stroke="#d4d4d4" stroke-width="1.100"/><rect x="1899.500" y="548" width="3" height="3" fill="#fff"/><rect x="1908" y="556" width="3" height="3" fill="#484848" stroke="#fff" stroke-width=".8"/><rect x="1899.500" y="564.500" width="3" height="3" fill="#fff"/><text x="1893.500" y="604" font-family="Liberation Sans, sans-serif" font-size="17" font-weight="bold" fill="#d4d4d4">A</text><path d="M1907.500 591v14" stroke="#d4d4d4" stroke-width="1"/><text x="1895.500" y="633" font-family="Liberation Sans, sans-serif" font-size="17" font-weight="bold" fill="#d4d4d4">¶</text><text x="1894" y="662" font-family="Liberation Serif, serif" font-style="italic" font-weight="bold" font-size="20" fill="#d4d4d4">O</text></svg></div>
<div id="tools" class="abs"><div class="abs" style="left:0;top:0;width:39px;height:12px;background:#333;border-bottom:1px solid #2a2a2a"></div><svg class="abs" style="left:4px;top:2px" width="10" height="8" viewBox="0 0 10 8" fill="#d0d0d0"><path d="M1 1l3.500 3-3.500 3zM5.500 1l3.500 3-3.500 3z"/></svg><div class="abs" style="left:0;top:12px;width:39px;height:1px;background:#5c5c5c"></div><div class="abs" style="left:10px;top:15px;width:20px;height:4px;background:repeating-linear-gradient(90deg,#1c1c1c 0 1px,transparent 1px 2px)"></div><div class="abs" style="left:6px;top:29px;width:29px;height:23px;background:#2f2f2f;border:1px solid #262626;border-radius:1px"></div><svg class="abs" style="left:0;top:0" width="40" height="975" viewBox="0 65 40 975" fill="#d0d0d0" stroke="none"><path d="M4 190.5H35" stroke="#3a3a3a" stroke-width="1"/><path d="M4 191.5H35" stroke="#555" stroke-width="1"/><path d="M4 384.5H35" stroke="#3a3a3a" stroke-width="1"/><path d="M4 385.5H35" stroke="#555" stroke-width="1"/><path d="M4 530.5H35" stroke="#3a3a3a" stroke-width="1"/><path d="M4 531.5H35" stroke="#555" stroke-width="1"/><path d="M4 628.5H35" stroke="#3a3a3a" stroke-width="1"/><path d="M4 629.5H35" stroke="#555" stroke-width="1"/><path d="M4 677.5H35" stroke="#3a3a3a" stroke-width="1"/><path d="M4 678.5H35" stroke="#555" stroke-width="1"/><path d="M4 775.5H35" stroke="#3a3a3a" stroke-width="1"/><path d="M4 776.5H35" stroke="#555" stroke-width="1"/><path d="M33 137v-3l-3 3z" fill="#c8c8c8"/><path d="M33 211v-3l-3 3z" fill="#c8c8c8"/><path d="M33 235v-3l-3 3z" fill="#c8c8c8"/><path d="M33 259v-3l-3 3z" fill="#c8c8c8"/><path d="M33 283v-3l-3 3z" fill="#c8c8c8"/><path d="M33 331v-3l-3 3z" fill="#c8c8c8"/><path d="M33 379v-3l-3 3z" fill="#c8c8c8"/><path d="M33 404v-3l-3 3z" fill="#c8c8c8"/><path d="M33 428v-3l-3 3z" fill="#c8c8c8"/><path d="M33 452v-3l-3 3z" fill="#c8c8c8"/><path d="M33 500v-3l-3 3z" fill="#c8c8c8"/><path d="M33 524v-3l-3 3z" fill="#c8c8c8"/><path d="M33 598v-3l-3 3z" fill="#c8c8c8"/><path d="M33 648v-3l-3 3z" fill="#c8c8c8"/><path d="M33 672v-3l-3 3z" fill="#c8c8c8"/><path d="M33 722v-3l-3 3z" fill="#c8c8c8"/><path d="M33 746v-3l-3 3z" fill="#c8c8c8"/><path d="M15.500 96.500V112l3.600-3.300 2.400 5.500 2.300-1-2.400-5.400h4.800z" fill="#2a2a2a" stroke="#e6e6e6" stroke-width="1.200" stroke-linejoin="miter"/><path d="M16 122.500V137l3.400-3.100 2.300 5.100 2-.9-2.300-5h4.600z"/><path d="M20.5 153l7.500 7.500" stroke="#1e1e1e" stroke-width="3.200"/><path d="M20.500 153l7.500 7.500" stroke="#d0d0d0" stroke-width="2"/><path d="M17.2 143.7L18.2 147.8L21.9 145.6L19.7 149.3L23.8 150.3L19.7 151.3L21.9 155.0L18.2 152.8L17.2 156.9L16.2 152.8L12.5 155.0L14.7 151.3L10.6 150.3L14.7 149.3L12.5 145.6L16.2 147.8z"/><ellipse cx="20" cy="174.500" rx="7.600" ry="5.200" fill="none" stroke="#d0d0d0" stroke-width="1.700"/><path d="M13.500 178.500c-1.800.3-1.800 2 0 2.200s2.500 1.500 1 3.300" fill="none" stroke="#d0d0d0" stroke-width="1.300"/><path d="M20 171.500l9.500 8.800-5.300.7-4.200 4.500z" stroke="#484848" stroke-width=".6"/><path d="M13 213.500l1.500-8.500 7-5.500 5 5-5.500 7z"/><path d="M13.500 213l6-6" stroke="#484848" stroke-width="1"/><circle cx="20" cy="206.500" r="1.300" fill="#484848"/><path d="M22.500 198l2-2 5 5-2 2z"/><text x="20" y="235.500" text-anchor="middle" font-family="Liberation Serif, serif" font-size="22" fill="#d0d0d0">T</text><path d="M13 258L26.500 244" stroke="#d0d0d0" stroke-width="1.600"/><rect x="13.500" y="269.500" width="13" height="11" fill="#6e6e6e" stroke="#d0d0d0" stroke-width="1.200"/><path d="M27.800 290.200l1.600 1.300-8.300 10.200-2.300-1.900z"/><path d="M10.700 304.400c2.300-.4 3.500-1.300 4.700-2.400 1.400-1.200 3.300-.9 4.300.2 1 1.200.8 2.700-.5 3.500-2.300 1.300-5.800.2-8.500-1.300z"/><path d="M12.800 331l1.300-4.800 2.600-2.900 3.500 3.200-2.600 2.900z" fill="#e0e0e0"/><path d="M16.700 323.300l5.800-6.400 3.500 3.200-5.800 6.400z" fill="#8e8e8e"/><path d="M22.500 316.900l1.700-1.900c.9-1 2.300-1 3.200-.2l.4.400c.9.800 1 2.200.1 3.200l-1.900 1.700z" fill="#dcdcdc"/><path d="M12 342.500h8.500c2-1.500 5-1.500 6.500 0 1.500 1.500 1.500 4 .5 6l-3 .5v4.500h-12.500z" fill="#b8b8b8"/><path d="M12 350.500h12.500v3h-12.500z" fill="#9a9a9a"/><path d="M16 348c1.500.2 2.500-.8 3.500-2 1.200-1.400 3-1.400 4 -.5 1 1 .8 2.500-.5 3.500-2 1.300-5 .500-7-1z" fill="#333"/><path d="M23.500 345.500l6-6 1 1-5.500 6.500z" fill="#d8d8d8"/><path d="M12.500 371l4.500-7h11.500l-4.500 7z"/><path d="M12.500 372h11.500v4.500h-11.500z" fill="#a8a8a8"/><path d="M25 371.500l4.500-7v4.500l-4.500 7z" fill="#8c8c8c"/><path d="M14 394a7 7 0 1 0 7-3" fill="none" stroke="#d0d0d0" stroke-width="1.400" stroke-dasharray="2.400 1.800"/><path d="M14.500 390.500l6-2.800v5.600z"/><path d="M20.500 391a7 7 0 0 1 6.800 5" fill="none" stroke="#d0d0d0" stroke-width="1.400"/><rect x="11.500" y="420.500" width="8" height="7" fill="none" stroke="#d0d0d0" stroke-width="1.100"/><rect x="16.500" y="414.500" width="11" height="9.500" fill="#4a4a4a" stroke="#d0d0d0" stroke-width="1.100"/><path d="M20 421l4.500-4M21.500 416.800h3.300v3" fill="none" stroke="#d0d0d0" stroke-width="1.200"/><path d="M13 439c2 0 3 2 3.500 4.500 1.500-1 3-.5 4 .5 2-3 5-3 8-1-1.500 3-1 5.500-3 6.500-2.500 1-4-1-6-1.500-2 1-4.500 1-6.500-.5 2-1.500 1.500-5 0-8.500z"/><path d="M12 453.500l11-11" stroke="#484848" stroke-width="2.400"/><path d="M12 453.500l11-11" stroke="#f0f0f0" stroke-width="1"/><circle cx="17" cy="448.500" r="2" fill="#f0f0f0" stroke="#484848" stroke-width=".8"/><circle cx="12" cy="453.500" r="1.300" fill="#484848" stroke="#f0f0f0" stroke-width=".8"/><circle cx="23" cy="442.500" r="1.300" fill="#484848" stroke="#f0f0f0" stroke-width=".8"/><path d="M12 461v13l3.500-3 0 0 7-4z"/><rect x="17.500" y="463.500" width="10" height="10" fill="none" stroke="#d0d0d0" stroke-width="1.100" stroke-dasharray="2 1.500"/><rect x="26" y="462" width="3" height="3"/><rect x="26" y="472" width="3" height="3"/><rect x="16" y="472" width="3" height="3"/><circle cx="17" cy="491" r="5.500" fill="#8a8a8a" stroke="#d0d0d0" stroke-width="1.200"/><circle cx="22.500" cy="489.500" r="5" fill="none" stroke="#d0d0d0" stroke-width="1.200"/><path d="M13 491.500h8" stroke="#f0f0f0" stroke-width="1.200" stroke-dasharray="1.200 1"/><path d="M22.500 490v11l2.800-2.600 1.700 3.600 1.500-.7-1.700-3.500h3.700z"/><path d="M12.500 509v16.500h17v-1.500l-12-2.500v-10.500z" fill="#9a9a9a"/><path d="M12.500 509.500l5 2v10l12 2.500M12.500 515h5M12.500 520.500h5M21 522.500v-9l-3.500-1.500M25 523.300v-6l-4-1.500M21 518h8" fill="none" stroke="#e0e0e0" stroke-width="1.100"/><rect x="12.500" y="536.500" width="15" height="12" fill="#5a5a5a" stroke="#d8d8d8" stroke-width="1.200"/><path d="M13 545c4-1 6-5 7-8.500M13 540c5 1 10 0 14.500-2M18 548.500c1-4 5-7 9.500-7.500M22 548.500c.5-3-1-7-4-9" fill="none" stroke="#d8d8d8" stroke-width="1.100"/><defs><linearGradient id="tg" x1="0" x2="1"><stop offset="0" stop-color="#444"/><stop offset="1" stop-color="#cfcfcf"/></linearGradient></defs><rect x="12.500" y="561.500" width="15" height="11" fill="url(#tg)" stroke="#d0d0d0" stroke-width="1.100"/><path d="M13 599.500l1-3 8-8.500 2.200 2-8 8.500z" fill="none" stroke="#d0d0d0" stroke-width="1.200"/><path d="M21 586.500l4.500 4.200" stroke="#d0d0d0" stroke-width="2"/><path d="M23.500 587l2.500-3c.8-.9 2-.9 2.800-.2.800.8.900 2 .1 2.800l-2.700 2.900z"/><rect x="11.500" y="607.500" width="8" height="8" fill="#9a9a9a" stroke="#d0d0d0" stroke-width="1"/><rect x="15" y="610" width="9" height="9" rx="2.500" fill="#777" stroke="#d0d0d0" stroke-width="1"/><circle cx="24.500" cy="618" r="4.300" fill="#5c5c5c" stroke="#d0d0d0" stroke-width="1.300"/><rect x="19.500" y="636.500" width="9" height="12" fill="#5a5a5a" stroke="#d0d0d0" stroke-width="1.200"/><rect x="21.500" y="633" width="5" height="3"/><circle cx="24" cy="643" r="2.300" fill="none" stroke="#e0e0e0" stroke-width="1.400"/><path d="M11 634h1M13.500 633h1M16 634h1M12 636.500h1M14.500 636h1M17 636.500h1M11 639h1M13.500 638.500h1M16 639h1" stroke="#d0d0d0" stroke-width="1.200"/><path d="M12.500 656V672.500H29" fill="none" stroke="#d0d0d0" stroke-width="1.200"/><rect x="15" y="665" width="3" height="7" fill="#a0a0a0"/><rect x="19.500" y="660" width="3" height="12"/><rect x="24" y="663" width="3" height="9" fill="#a0a0a0"/><rect x="14.500" y="685.500" width="11" height="10" fill="#7a7a7a" stroke="#d0d0d0" stroke-width="1.100"/><path d="M14.500 681v3M25.500 681v3M14.500 697v3M25.500 697v3M10 685.500h3M10 695.500h3M27 695.500h3M27 685.500h3" stroke="#d0d0d0" stroke-width="1.100"/><path d="M12 721.500l9-8 2.500 2.500c-3 3-7 5-11.500 5.500z"/><path d="M21.500 713l5-4.500h4l-6.500 7z" fill="#9c9c9c"/><path d="M15.500 747.500c-1-2-3-5-4.500-6.500-.8-1 .5-2.200 1.700-1.200l2 2v-7c0-1.300 2-1.300 2 0v-2c0-1.300 2.200-1.300 2.200 0v2-1.500c0-1.300 2.200-1.300 2.200 0v3-1.500c0-1.200 2-1.200 2 0v6c0 3-1 5-1.500 6.700z"/><circle cx="17.500" cy="760" r="4.800" fill="#8a8a8a" stroke="#d0d0d0" stroke-width="1.600"/><path d="M21 764l6 6" stroke="#d0d0d0" stroke-width="2.800" stroke-linecap="round"/><rect x="9.500" y="784.500" width="7" height="7" fill="#0a0a0a" stroke="#c4c4c4" stroke-width="1"/><rect x="5.500" y="779.500" width="8" height="8" fill="#2a2a2a" stroke="#c4c4c4" stroke-width="1"/><rect x="7" y="781" width="5" height="5" fill="#f0f0f0"/><path d="M27.500 787v-4.500h4.500M32 782.500v5.500" fill="none" stroke="#6c6c6c" stroke-width="1.400"/><path d="M24.500 784l3-3.500 3 3.500zM29 786.500l3 3.500 3-3.500z" fill="#6c6c6c"/><rect x="15.500" y="807.500" width="19" height="19" fill="#fff" stroke="#2a2a2a" stroke-width="1"/><rect x="21.500" y="813.500" width="7" height="7" fill="#444" stroke="#161616" stroke-width="1"/><path d="M16.300 826L34 808.300" stroke="#f0101a" stroke-width="2.200"/><rect x="5.500" y="797.500" width="19" height="19" fill="#464646" stroke="#2c2c2c" stroke-width="1"/><text x="15" y="812" text-anchor="middle" font-family="Liberation Sans, sans-serif" font-size="13" fill="#d6dce8">?</text><rect x="7" y="834" width="8.500" height="8" fill="#c2404a"/><defs><linearGradient id="tg2" x1="0" x2="1"><stop offset="0" stop-color="#fff"/><stop offset="1" stop-color="#111"/></linearGradient></defs><rect x="16.500" y="834" width="8" height="8" fill="url(#tg2)"/><rect x="25.500" y="834" width="8.500" height="8" fill="#fff"/><path d="M25.500 842L34 834" stroke="#e8141e" stroke-width="1.600"/><circle cx="18.500" cy="855" r="3.800" fill="#7a7a7a" stroke="#d0d0d0" stroke-width="1.200"/><rect x="19.500" y="856" width="6" height="5.500" fill="#b8b8b8" stroke="#d0d0d0" stroke-width=".8"/><rect x="11.500" y="879.500" width="11" height="8" fill="#5a5a5a" stroke="#d0d0d0" stroke-width="1.200"/><rect x="15.500" y="875.500" width="12" height="8.500" fill="#6e6e6e" stroke="#d0d0d0" stroke-width="1.200"/></svg></div>
<div id="ctrl" class="abs"><div class="abs" style="left:5px;top:6px;width:3px;height:20px;background:repeating-linear-gradient(#1e1e1e 0 1px,transparent 1px 2px)"></div><div class="lbl" style="left:17px;top:10px">Bild</div><div class="btn" style="left:422px;width:126px;color:#7c7c7c;background:#4a4a4a;box-shadow:none;border-color:#3a3a3a;letter-spacing:-0.079px">Original bearbeiten</div><div class="btn" style="left:555px;width:113px;letter-spacing:-0.136px">Bildnachzeichner</div><div class="abs" style="left:670px;top:13px;border-left:4px solid transparent;border-right:4px solid transparent;border-top:5px solid #d8d8d8"></div><div class="btn" style="left:686px;width:70px;letter-spacing:-0.191px">Maske</div><div class="lbl" style="left:764px;top:11px;letter-spacing:-0.102px">Deckkraft:</div><div class="fld" style="left:816px;width:53px;letter-spacing:-0.172px">60%</div><div class="abs" style="left:868px;top:7px;width:17px;height:18px;border:1px solid #2c2c2c;background:linear-gradient(#575757,#4b4b4b)"><div class="abs" style="left:3.5px;top:6px;border-left:4px solid transparent;border-right:4px solid transparent;border-top:5px solid #e0e0e0"></div></div><svg class="abs" style="left:895px;top:0" width="720" height="33" viewBox="895 32 720 33" fill="none" stroke="#d2d2d2" stroke-width="1" shape-rendering="crispEdges"><rect x="906.500" y="43.500" width="10" height="10"/><path d="M903 43.500h2M903 53.500h2M918 43.500h2M918 53.500h2M906.500 40v2M916.500 40v2M906.500 55v2M916.500 55v2" stroke="#a8a8a8"/><path d="M911.500 45v1.500M911.500 50.500v1.500M908 48.500h1.500M913.500 48.500h1.500" stroke="#b8b8b8"/><path d="M920 46h8l-4 4.500z" fill="#d2d2d2" stroke="none" shape-rendering="auto"/><path d="M945.5 40V55"/><rect x="947.5" y="42.5" width="6" height="4" fill="#cfcfcf"/><rect x="947.5" y="49.5" width="10" height="4"/><path d="M977.5 40V55"/><rect x="974.5" y="42.5" width="6" height="4" fill="#cfcfcf"/><rect x="971.5" y="49.5" width="12" height="4" fill="#484848"/><path d="M1010.5 40V55"/><rect x="1002.5" y="42.5" width="6" height="4" fill="#cfcfcf"/><rect x="998.5" y="49.5" width="10" height="4"/><path d="M1027 40.5H1042"/><rect x="1029.5" y="42.5" width="4" height="10"/><rect x="1036.5" y="42.5" width="4" height="6" fill="#cfcfcf"/><path d="M1053 47.5H1069"/><rect x="1055.5" y="41.5" width="4" height="12" fill="#484848"/><rect x="1062.5" y="44.5" width="4" height="6" fill="#cfcfcf"/><path d="M1080 54.5H1095"/><rect x="1082.5" y="42.5" width="4" height="10"/><rect x="1089.5" y="46.5" width="4" height="6" fill="#cfcfcf"/><path d="M1106.5 35V61" stroke="#353535"/><path d="M1107.5 35V61" stroke="#565656"/><rect x="1112.5" y="38.5" width="4" height="4" fill="none"/><rect x="1119.5" y="38.5" width="4" height="4" fill="none"/><rect x="1126.5" y="38.5" width="4" height="4" fill="none"/><rect x="1112.5" y="45.5" width="4" height="4" fill="none"/><rect x="1119.5" y="45.5" width="4" height="4" fill="none"/><rect x="1126.5" y="45.5" width="4" height="4" fill="none"/><rect x="1112.5" y="52.5" width="4" height="4" fill="none"/><rect x="1119.5" y="52.5" width="4" height="4" fill="#d2d2d2"/><rect x="1126.5" y="52.5" width="4" height="4" fill="none"/><path d="M1117 40.500h2M1124 40.500h2M1117 54.500h2M1124 54.500h2M1114.500 43v2M1114.500 50v2M1128.500 43v2M1128.500 50v2M1121.500 43v2M1121.500 50v2M1117 47.500h2M1124 47.500h2" stroke="#b0b0b0"/><g shape-rendering="auto" stroke-width="1.3"><path d="M1444 44.5h-3a3 3 0 0 0 0 6h3M1448 44.5h3a3 3 0 0 1 0 6h-3"/><path d="M1446 41v2M1446 52v2M1442.5 41.5l1 1.5M1449.5 41.5l-1 1.5M1442.5 53.5l1-1.5M1449.5 53.5l-1-1.5" stroke-width="1"/></g><path d="M1564.5 35V61" stroke="#353535"/><path d="M1565.5 35V61" stroke="#565656"/><g shape-rendering="auto"><rect x="1578.500" y="43.5" width="9" height="7" stroke-width="1.4"/><path d="M1575.5 40.5l2.5 2.500M1590.5 40.5l-2.500 2.500M1575.5 53.5l2.500-2.500M1590.500 53.5l-2.500-2.500"/></g></svg><div class="lbl" style="left:1141px;top:12px;font-weight:bold">x:</div><div class="abs" style="left:1157px;top:7px;width:17px;height:18px;border:1px solid #2c2c2c;background:linear-gradient(#575757,#4b4b4b)"><div class="abs" style="left:4px;top:2px;border-left:3.5px solid transparent;border-right:3.5px solid transparent;border-bottom:4px solid #d8d8d8"></div><div class="abs" style="left:4px;top:10px;border-left:3.5px solid transparent;border-right:3.5px solid transparent;border-top:4px solid #d8d8d8"></div><div class="abs" style="left:0;top:7.5px;width:15px;height:1px;background:#3a3a3a"></div></div><div class="fld" style="left:1173px;width:58px;letter-spacing:-0.448px">27,501 mm</div><div class="lbl" style="left:1239px;top:12px;font-weight:bold">y:</div><div class="abs" style="left:1255px;top:7px;width:17px;height:18px;border:1px solid #2c2c2c;background:linear-gradient(#575757,#4b4b4b)"><div class="abs" style="left:4px;top:2px;border-left:3.5px solid transparent;border-right:3.5px solid transparent;border-bottom:4px solid #d8d8d8"></div><div class="abs" style="left:4px;top:10px;border-left:3.5px solid transparent;border-right:3.5px solid transparent;border-top:4px solid #d8d8d8"></div><div class="abs" style="left:0;top:7.5px;width:15px;height:1px;background:#3a3a3a"></div></div><div class="fld" style="left:1271px;width:58px;letter-spacing:-0.373px">87 mm</div><div class="lbl" style="left:1337px;top:10px;font-weight:bold">B:</div><div class="abs" style="left:1353px;top:7px;width:17px;height:18px;border:1px solid #2c2c2c;background:linear-gradient(#575757,#4b4b4b)"><div class="abs" style="left:4px;top:2px;border-left:3.5px solid transparent;border-right:3.5px solid transparent;border-bottom:4px solid #d8d8d8"></div><div class="abs" style="left:4px;top:10px;border-left:3.5px solid transparent;border-right:3.5px solid transparent;border-top:4px solid #d8d8d8"></div><div class="abs" style="left:0;top:7.5px;width:15px;height:1px;background:#3a3a3a"></div></div><div class="fld" style="left:1369px;width:58px;letter-spacing:-0.370px">58,999 mm</div><div class="lbl" style="left:1465px;top:10px;font-weight:bold">H:</div><div class="abs" style="left:1482px;top:7px;width:17px;height:18px;border:1px solid #2c2c2c;background:linear-gradient(#575757,#4b4b4b)"><div class="abs" style="left:4px;top:2px;border-left:3.5px solid transparent;border-right:3.5px solid transparent;border-bottom:4px solid #d8d8d8"></div><div class="abs" style="left:4px;top:10px;border-left:3.5px solid transparent;border-right:3.5px solid transparent;border-top:4px solid #d8d8d8"></div><div class="abs" style="left:0;top:7.5px;width:15px;height:1px;background:#3a3a3a"></div></div><div class="fld" style="left:1498px;width:59px;letter-spacing:-0.337px">88,999 mm</div><svg class="abs" style="left:1888px;top:10px" width="16" height="12" viewBox="0 0 16 12"><path d="M0 3h5l-2.500 3z" fill="#d2d2d2"/><path d="M5 2.500h1.500M8 2.500h7M5 5.500h1.500M8 5.500h7M5 8.500h1.500M8 8.500h7" stroke="#d2d2d2" stroke-width="1"/></svg></div>
<div id="menubar" class="abs"><div class="t" style="left:8px;top:3px;font-size:21px;font-weight:bold;color:#c48a5c;letter-spacing:-0.5px;transform:scaleX(.92);transform-origin:0 0">Ai</div><div class="abs" style="left:42px;top:4px;width:40px;height:21px;background:#2e2e2e"></div><div class="t" style="left:47px;letter-spacing:-0.203px">Datei</div><div class="t" style="left:92px;letter-spacing:-0.235px">Bearbeiten</div><div class="t" style="left:166.7px;letter-spacing:0.052px">Objekt</div><div class="t" style="left:220px;letter-spacing:-0.045px">Schrift</div><div class="t" style="left:270.7px;letter-spacing:-0.108px">Auswahl</div><div class="t" style="left:332.7px;letter-spacing:-0.078px">Effekt</div><div class="t" style="left:379.7px;letter-spacing:0.092px">Ansicht</div><div class="t" style="left:437px;letter-spacing:-0.427px">Fenster</div><div class="t" style="left:492.7px;letter-spacing:0.197px">Hilfe</div><div class="abs" style="left:531px;top:5px;width:2px;height:21px;border-left:1px solid #373737;border-right:1px solid #585858"></div><div class="abs" style="left:548px;top:7px;width:16px;height:15px;border:1px solid #d6d6d6;border-radius:1px"></div><div class="t" style="left:551px;top:10px;font-size:9px;font-weight:bold;color:#d6d6d6">Br</div><svg class="abs" style="left:587px;top:8px" width="30" height="14" viewBox="0 0 30 14"><rect x=".5" y=".5" width="16" height="12" fill="none" stroke="#d6d6d6"/><rect x="2" y="2" width="6" height="9" fill="#d6d6d6"/><rect x="9.500" y="2" width="6" height="4" fill="#d6d6d6"/><rect x="9.500" y="7" width="6" height="4" fill="#d6d6d6"/><path d="M20 5h8l-4 4.500z" fill="#d6d6d6"/></svg><div class="abs" style="left:1522px;top:5px;width:2px;height:21px;border-left:1px solid #373737;border-right:1px solid #585858"></div><div class="t" style="left:1535px;top:8px;color:#d0d0d0;letter-spacing:-0.021px">Mein Arbeitsbereich</div><div class="abs" style="left:1650px;top:13px;border-left:3px solid transparent;border-right:3px solid transparent;border-top:4px solid #d6d6d6"></div><div class="abs" style="left:1669px;top:5px;width:2px;height:21px;border-left:1px solid #373737;border-right:1px solid #585858"></div><div class="abs" style="left:1680px;top:5px;width:125px;height:18px;background:#a3a3a3;border:1px solid #2a2a2a"></div><svg class="abs" style="left:1682px;top:7px" width="14" height="14" viewBox="0 0 14 14"><circle cx="8" cy="5.500" r="3.700" fill="none" stroke="#222" stroke-width="1.400"/><path d="M5.300 8.200L1.500 12" stroke="#222" stroke-width="1.800"/></svg><div class="abs" style="left:1814px;top:-3px;width:103px;height:22px;border:1px solid #222;border-radius:0 0 5px 5px;background:linear-gradient(#3c3c3c,#484848);box-shadow:inset 0 -1px 0 #5a5a5a"></div><div class="abs" style="left:1842px;top:0;width:1px;height:18px;background:#262626"></div><div class="abs" style="left:1869px;top:0;width:1px;height:18px;background:#262626"></div><div class="abs" style="left:1823px;top:11px;width:10px;height:3px;background:#fff"></div><svg class="abs" style="left:1850px;top:4px" width="13" height="12" viewBox="0 0 13 12" fill="none" stroke="#fff" stroke-width="1.600"><rect x="4" y="1" width="7" height="6"/><rect x="1" y="4" width="7" height="6" fill="#444"/></svg><svg class="abs" style="left:1888px;top:4px" width="12" height="11" viewBox="0 0 12 11"><path d="M1.500 1.500l9 8M10.500 1.500l-9 8" stroke="#fff" stroke-width="2.600"/></svg></div>
<div id="menu" class="abs"><div class="gut"></div><div class="mi" style="top:5px;letter-spacing:-0.286px">Neu...</div><div class="sc" style="top:5px;letter-spacing:0.152px">Strg+N</div><div class="mi" style="top:27px;letter-spacing:-0.246px">Neu aus Vorlage...</div><div class="sc" style="top:27px;letter-spacing:0.044px">Umschalttaste+Strg+N</div><div class="mi" style="top:49px;letter-spacing:-0.057px">Öffnen...</div><div class="sc" style="top:49px;letter-spacing:-0.010px">Strg+O</div><div class="mi" style="top:71px;letter-spacing:-0.123px">Letzte Dateien öffnen</div><div class="arr" style="top:74px"></div><div class="mi" style="top:93px;letter-spacing:-0.098px">Bridge durchsuchen...</div><div class="sc" style="top:93px;letter-spacing:0.223px">Alt+Strg+O</div><div class="sep" style="top:115px"></div><div class="mi" style="top:123px;letter-spacing:-0.342px">Schließen</div><div class="sc" style="top:123px;letter-spacing:0.043px">Strg+W</div><div class="mi" style="top:145px;letter-spacing:-0.305px">Speichern</div><div class="sc" style="top:145px;letter-spacing:-0.239px">Strg+S</div><div class="mi" style="top:167px;letter-spacing:-0.131px">Speichern unter...</div><div class="sc" style="top:167px;letter-spacing:-0.073px">Umschalttaste+Strg+S</div><div class="mi" style="top:189px;letter-spacing:-0.187px">Kopie speichern...</div><div class="sc" style="top:189px;letter-spacing:0.057px">Alt+Strg+S</div><div class="mi" style="top:211px;letter-spacing:-0.182px">Als Vorlage speichern...</div><div class="mi" style="top:233px;letter-spacing:-0.224px">Für Web speichern...</div><div class="sc" style="top:233px;letter-spacing:0.022px">Alt+Umschalttaste+Strg+S</div><div class="mi" style="top:255px;letter-spacing:-0.217px">Ausgewählte Slices speichern...</div><div class="mi" style="top:277px;letter-spacing:-0.132px">Zurück zur letzten Version</div><div class="sc" style="top:277px;letter-spacing:-0.696px">F12</div><div class="sep" style="top:299px"></div><div class="abs" style="left:3px;top:304px;width:393px;height:22px;border:1px solid #aecff7;border-radius:3px;background:linear-gradient(#f2f6fb,#dde8f6)"></div><div class="mi" style="top:307px;letter-spacing:-0.313px">Platzieren...</div><div class="sep" style="top:329px"></div><div class="mi" style="top:337px;letter-spacing:-0.047px">Für Microsoft Office speichern...</div><div class="mi" style="top:359px;letter-spacing:-0.263px">Exportieren...</div><div class="mi" style="top:381px;letter-spacing:-0.145px">Auf Behance teilen...</div><div class="sep" style="top:403px"></div><div class="mi" style="top:411px;letter-spacing:-0.252px">Verpacken...</div><div class="sc" style="top:411px;letter-spacing:0.063px">Alt+Umschalttaste+Strg+P</div><div class="mi" style="top:433px;letter-spacing:-0.166px">Skripten</div><div class="arr" style="top:436px"></div><div class="sep" style="top:455px"></div><div class="mi" style="top:463px;letter-spacing:0.011px">Dokument einrichten...</div><div class="sc" style="top:463px;letter-spacing:0.157px">Alt+Strg+P</div><div class="mi" style="top:485px;letter-spacing:0.136px">Dokumentfarbmodus</div><div class="arr" style="top:488px"></div><div class="mi" style="top:507px;letter-spacing:0.046px">Dateiinformationen...</div><div class="sc" style="top:507px;letter-spacing:0.091px">Alt+Umschalttaste+Strg+I</div><div class="sep" style="top:529px"></div><div class="mi" style="top:537px;letter-spacing:-0.199px">Drucken...</div><div class="sc" style="top:537px;letter-spacing:-0.072px">Strg+P</div><div class="sep" style="top:559px"></div><div class="mi" style="top:567px;letter-spacing:-0.392px">Beenden</div><div class="sc" style="top:567px;letter-spacing:0.040px">Strg+Q</div></div>
<div class="red" style="left:37px;top:-1px;width:49px;height:31px"></div><div class="red" style="left:1px;top:85px;width:39px;height:39px"></div><div class="red" style="left:42px;top:325px;width:400px;height:32px"></div><div class="red" style="left:755px;top:28px;width:141px;height:38px"></div><div class="red" style="left:1554px;top:160px;width:296px;height:28px"></div>
</body></html>
